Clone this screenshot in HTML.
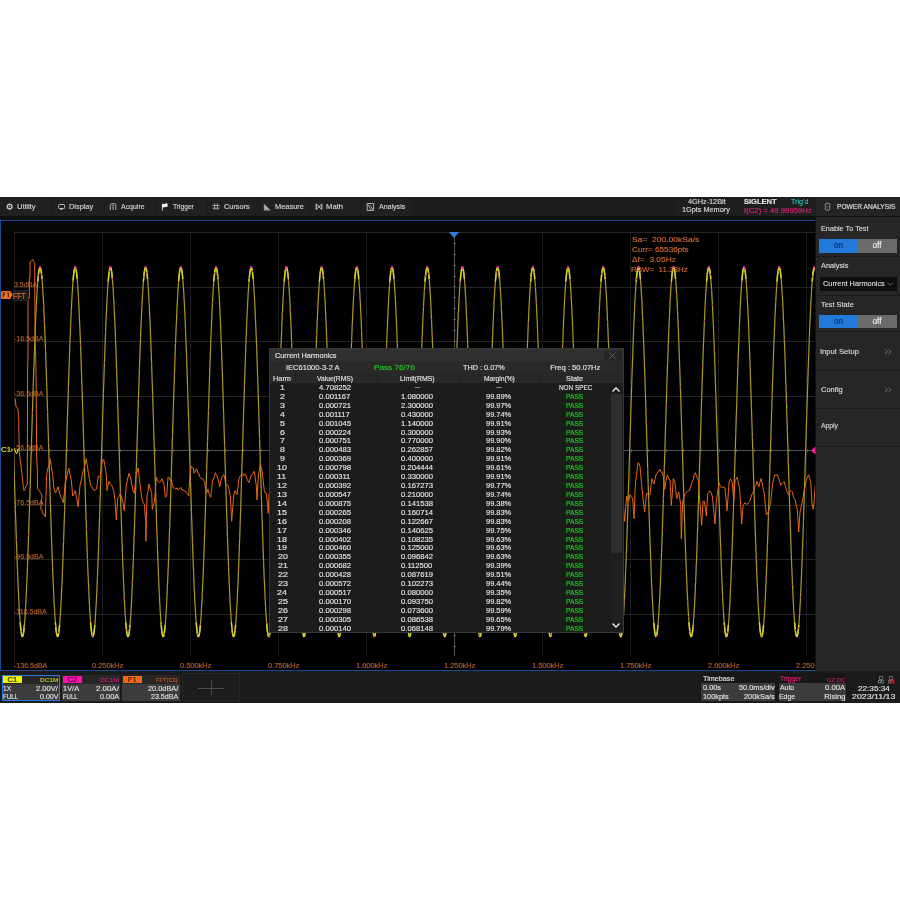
<!DOCTYPE html>
<html><head><meta charset="utf-8"><style>
*{margin:0;padding:0;box-sizing:border-box}
html,body{width:900px;height:900px;background:#fff;overflow:hidden}
body{position:relative;font-family:"Liberation Sans", sans-serif}
#w{position:absolute;left:0;top:0;width:900px;height:900px;will-change:transform}
.b{position:absolute}
.L{position:absolute;left:0;top:0}
.tx i{position:absolute;font-style:normal;line-height:10px;white-space:nowrap;transform-origin:0 0;-webkit-text-stroke:0.15px currentColor}
</style></head><body><div id="w">
<div class="b" style="left:0;top:197px;width:900px;height:506px;background:#000"></div>
<!-- top bar -->
<div class="b" style="left:0;top:197px;width:900px;height:19px;background:#1c1c1c"></div>
<div class="b" style="left:0;top:216px;width:900px;height:4px;background:#101010"></div>
<div class="b" style="left:0;top:197px;width:412px;height:19px;background:#202020"></div>
<div class="b" style="left:52px;top:197px;width:1px;height:19px;background:#1b1b1b"></div>
<div class="b" style="left:104px;top:197px;width:1px;height:19px;background:#1b1b1b"></div>
<div class="b" style="left:156px;top:197px;width:1px;height:19px;background:#1b1b1b"></div>
<div class="b" style="left:207px;top:197px;width:1px;height:19px;background:#1b1b1b"></div>
<div class="b" style="left:259px;top:197px;width:1px;height:19px;background:#1b1b1b"></div>
<div class="b" style="left:310px;top:197px;width:1px;height:19px;background:#1b1b1b"></div>
<div class="b" style="left:361px;top:197px;width:1px;height:19px;background:#1b1b1b"></div>
<div class="b" style="left:675px;top:197px;width:141px;height:19px;background:#1e1e1e"></div>
<div class="b" style="left:816px;top:197px;width:84px;height:19px;background:#242424"></div>
<div class="b" style="left:0;top:220px;width:816px;height:1px;background:#1b4a92"></div>
<div class="b" style="left:1px;top:221px;width:814px;height:11px;background:#070707"></div>
<svg class="L" width="900" height="900" viewBox="0 0 900 900">
 <polygon points="9.60,203.20 12.54,204.90 12.54,208.30 9.60,210.00 6.66,208.30 6.66,204.90" fill="#c8c8c8"/><circle cx="9.6" cy="206.6" r="1.7" fill="#202020"/><circle cx="9.6" cy="206.6" r="0.7" fill="#c8c8c8"/>
 <rect x="58.6" y="204.5" width="6" height="4" rx="0.8" fill="none" stroke="#b8b8b8" stroke-width="1"/><circle cx="61.4" cy="209.2" r="0.9" fill="#d0d0d0"/>
 <path d="M110.3 210V205.2Q110.5 204 112 203.8L114.5 203.6Q115.8 203.6 115.8 205V210M113.1 204.5V210" fill="none" stroke="#b4b4b4" stroke-width="1"/>
 <path d="M162.4 203.8V210.6" stroke="#d8d8d8" stroke-width="1"/>
 <path d="M162.4 203.6Q164 204.6 165.2 203.6Q166.4 203 167.6 203.8V207Q166.4 206.4 165.2 207Q164 207.8 162.4 207Z" fill="#f4f4f4"/>
 <path d="M214.6 203.3V210M217.4 203.3V210M212.4 205.5H219.6M212.4 208.2H219.6" stroke="#a8a8a8" stroke-width="0.9"/>
 <path d="M263.8 203.5V210.5H270.8Z" fill="#9c9c9c"/><path d="M265.2 207.2h1M266.5 208.3h1" stroke="#d8d8d8" stroke-width="0.8"/>
 <path d="M316.2 203.8V209.6M321.8 203.8V209.6M316.2 204L321.8 209.4M321.8 204L316.2 209.4" fill="none" stroke="#d0d0d0" stroke-width="1"/>
 <rect x="367.2" y="203.6" width="6.4" height="6.8" fill="none" stroke="#b0b0b0" stroke-width="1"/><path d="M367.5 204L371 209.8M370.2 205.5L373.2 210" stroke="#b0b0b0" stroke-width="0.9"/>
 <rect x="825.3" y="203.3" width="4.4" height="6.8" rx="0.8" fill="none" stroke="#8a8a8a" stroke-width="1"/><circle cx="827.5" cy="206.7" r="0.6" fill="#8a8a8a"/>
</svg>
<!-- right panel -->
<div class="b" style="left:816px;top:217px;width:84px;height:455px;background:#262626"></div>
<div class="b" style="left:815px;top:220px;width:1px;height:452px;background:#121212"></div>
<div class="b" style="left:818.5px;top:238.8px;width:39.5px;height:14px;background:#2378dc"></div>
<div class="b" style="left:858px;top:238.8px;width:39px;height:14px;background:#6a6a6a"></div>
<div class="b" style="left:816px;top:256px;width:84px;height:1px;background:#1a1a1a"></div>
<div class="b" style="left:819.5px;top:277px;width:77px;height:13.5px;background:#0e0e0e"></div>
<svg class="L" width="900" height="900" viewBox="0 0 900 900"><path d="M887.5 282.5L890.3 285.3L893 282.5" fill="none" stroke="#6a6a6a" stroke-width="0.9"/>
<path d="M885 349.5L887.5 351.8L885 354M888.5 349.5L891 351.8L888.5 354" fill="none" stroke="#6a6a6a" stroke-width="1"/>
<path d="M885 387.5L887.5 389.8L885 392M888.5 387.5L891 389.8L888.5 392" fill="none" stroke="#6a6a6a" stroke-width="1"/></svg>
<div class="b" style="left:816px;top:294.5px;width:84px;height:1px;background:#1a1a1a"></div>
<div class="b" style="left:818.5px;top:314.8px;width:39.5px;height:13.7px;background:#2378dc"></div>
<div class="b" style="left:858px;top:314.8px;width:39px;height:13.7px;background:#6a6a6a"></div>
<div class="b" style="left:816px;top:331px;width:84px;height:1px;background:#1a1a1a"></div>
<div class="b" style="left:816px;top:369.5px;width:84px;height:1px;background:#1a1a1a"></div>
<div class="b" style="left:816px;top:408px;width:84px;height:1px;background:#1a1a1a"></div>
<div class="b" style="left:816px;top:445.5px;width:84px;height:1px;background:#1a1a1a"></div>
<!-- plot -->
<svg class="L" width="900" height="900" viewBox="0 0 900 900">
<defs><clipPath id="pc"><rect x="14" y="221" width="801" height="449"/></clipPath><clipPath id="pc2"><rect x="1" y="221" width="814" height="449"/></clipPath></defs>
<path d="M14.5 232V669M102.5 232V669M190.5 232V669M278.5 232V669M366.5 232V669M454.5 232V669M542.5 232V669M630.5 232V669M718.5 232V669M806.5 232V669" stroke="#1a1a1a" stroke-width="1" fill="none"/>
<path d="M14 232.5H815M14 287.5H815M14 341.5H815M14 396.5H815M14 450.5H815M14 505.5H815M14 559.5H815M14 614.5H815" stroke="#242424" stroke-width="1" fill="none"/>
<path d="M454.5 232V669M14 450.5H815" stroke="#505050" stroke-width="1" fill="none"/>
<path d="M453 243.5h3M453 254.5h3M453 265.5h3M453 276.5h3M453 286.5h3M453 297.5h3M453 308.5h3M453 319.5h3M453 330.5h3M453 341.5h3M453 352.5h3M453 363.5h3M453 374.5h3M453 385.5h3M453 396.5h3M453 406.5h3M453 417.5h3M453 428.5h3M453 439.5h3M453 450.5h3M453 461.5h3M453 472.5h3M453 483.5h3M453 494.5h3M453 504.5h3M453 515.5h3M453 526.5h3M453 537.5h3M453 548.5h3M453 559.5h3M453 570.5h3M453 581.5h3M453 592.5h3M453 603.5h3M453 614.5h3M453 624.5h3M453 635.5h3M453 646.5h3M453 657.5h3M32.5 449v3M49.5 449v3M67.5 449v3M84.5 449v3M102.5 449v3M120.5 449v3M137.5 449v3M155.5 449v3M173.5 449v3M190.5 449v3M208.5 449v3M225.5 449v3M243.5 449v3M261.5 449v3M278.5 449v3M296.5 449v3M313.5 449v3M331.5 449v3M349.5 449v3M366.5 449v3M384.5 449v3M402.5 449v3M419.5 449v3M437.5 449v3M454.5 449v3M472.5 449v3M490.5 449v3M507.5 449v3M525.5 449v3M542.5 449v3M560.5 449v3M578.5 449v3M595.5 449v3M613.5 449v3M631.5 449v3M648.5 449v3M666.5 449v3M683.5 449v3M701.5 449v3M719.5 449v3M736.5 449v3M754.5 449v3M771.5 449v3M789.5 449v3M807.5 449v3" stroke="#505050" stroke-width="1" fill="none"/>
</svg>
<div class="b" style="left:88.9px;top:656px;width:37px;height:13.5px;background:#000"></div>
<div class="b" style="left:176.98px;top:656px;width:37px;height:13.5px;background:#000"></div>
<div class="b" style="left:265.06px;top:656px;width:37px;height:13.5px;background:#000"></div>
<div class="b" style="left:353.14px;top:656px;width:37px;height:13.5px;background:#000"></div>
<div class="b" style="left:441.22px;top:656px;width:37px;height:13.5px;background:#000"></div>
<div class="b" style="left:529.3px;top:656px;width:37px;height:13.5px;background:#000"></div>
<div class="b" style="left:617.38px;top:656px;width:37px;height:13.5px;background:#000"></div>
<div class="b" style="left:705.46px;top:656px;width:37px;height:13.5px;background:#000"></div>
<div class="b" style="left:793.54px;top:656px;width:21.46px;height:13.5px;background:#000"></div><div class="tx"><i style="left:14.43px;top:279.75px;font-size:8px;color:#b8642e;transform:scaleX(0.88);">3.5dBA</i>
<i style="left:14.39px;top:333.75px;font-size:8px;color:#b8642e;transform:scaleX(0.88);">-16.5dBA</i>
<i style="left:14.39px;top:388.75px;font-size:8px;color:#b8642e;transform:scaleX(0.88);">-36.5dBA</i>
<i style="left:14.39px;top:442.75px;font-size:8px;color:#b8642e;transform:scaleX(0.88);">-56.5dBA</i>
<i style="left:14.39px;top:497.75px;font-size:8px;color:#b8642e;transform:scaleX(0.88);">-76.5dBA</i>
<i style="left:14.39px;top:551.75px;font-size:8px;color:#b8642e;transform:scaleX(0.88);">-96.5dBA</i>
<i style="left:14.39px;top:606.75px;font-size:8px;color:#b8642e;transform:scaleX(0.88);">-116.5dBA</i>
<i style="left:14.39px;top:660.75px;font-size:8px;color:#b8642e;transform:scaleX(0.88);">-136.5dBA</i>
<i style="left:91.61px;top:660.75px;font-size:8px;color:#b8642e;transform:scaleX(0.93);">0.250kHz</i>
<i style="left:179.69px;top:660.75px;font-size:8px;color:#b8642e;transform:scaleX(0.93);">0.500kHz</i>
<i style="left:267.77px;top:660.75px;font-size:8px;color:#b8642e;transform:scaleX(0.93);">0.750kHz</i>
<i style="left:355.57px;top:660.75px;font-size:8px;color:#b8642e;transform:scaleX(0.93);">1.000kHz</i>
<i style="left:443.65px;top:660.75px;font-size:8px;color:#b8642e;transform:scaleX(0.93);">1.250kHz</i>
<i style="left:531.73px;top:660.75px;font-size:8px;color:#b8642e;transform:scaleX(0.93);">1.500kHz</i>
<i style="left:619.81px;top:660.75px;font-size:8px;color:#b8642e;transform:scaleX(0.93);">1.750kHz</i>
<i style="left:708.08px;top:660.75px;font-size:8px;color:#b8642e;transform:scaleX(0.93);">2.000kHz</i>
<i style="left:796.16px;top:660.75px;font-size:8px;color:#b8642e;transform:scaleX(0.93);">2.250</i>
<i style="left:631.52px;top:234.75px;font-size:7.8px;color:#d46c34;transform:scaleX(1.09);white-space:pre;">Sa=  200.00kSa/s</i>
<i style="left:631.58px;top:244.75px;font-size:7.8px;color:#d46c34;transform:scaleX(1.05);white-space:pre;">Curr= 65536pts</i>
<i style="left:631.75px;top:254.75px;font-size:7.8px;color:#d46c34;transform:scaleX(1.07);white-space:pre;">Δf=  3.05Hz</i>
<i style="left:631.35px;top:264.75px;font-size:7.8px;color:#d46c34;transform:scaleX(1.02);white-space:pre;">RBW=  11.38Hz</i></div>
<svg class="L" width="900" height="900" viewBox="0 0 900 900">
<defs><clipPath id="pc"><rect x="14" y="221" width="801" height="449"/></clipPath><clipPath id="pc2"><rect x="1" y="221" width="814" height="449"/></clipPath></defs>
<g clip-path="url(#pc)">
<path d="M13 432.27 L13.4 445.41 L13.8 458.59 L14.2 471.73 L14.6 484.78 L15 497.65 L15.4 510.3 L15.8 522.64 L16.2 534.63 L16.6 546.2 L17 557.28 L17.4 567.83 L17.8 577.79 L18.2 587.11 L18.6 595.74 L19 603.63 L19.4 610.76 L19.8 617.07 L20.2 622.55 L20.6 627.15 L21 630.87 L21.4 633.67 L21.8 635.54 L22.2 636.48 L22.6 636.48 L23 635.54 L23.4 633.67 L23.8 630.87 L24.2 627.15 L24.6 622.55 L25 617.07 L25.4 610.76 L25.8 603.63 L26.2 595.74 L26.6 587.11 L27 577.79 L27.4 567.83 L27.8 557.28 L28.2 546.2 L28.6 534.63 L29 522.64 L29.4 510.3 L29.8 497.65 L30.2 484.78 L30.6 471.73 L31 458.59 L31.4 445.41 L31.8 432.27 L32.2 419.22 L32.6 406.35 L33 393.7 L33.4 381.36 L33.8 369.37 L34.2 357.8 L34.6 346.72 L35 336.17 L35.4 326.21 L35.8 316.89 L36.2 308.26 L36.6 300.37 L37 293.24 L37.4 286.93 L37.8 281.45 L38.2 276.85 L38.6 273.13 L39 270.33 L39.4 268.46 L39.8 267.52 L40.2 267.52 L40.6 268.46 L41 270.33 L41.4 273.13 L41.8 276.85 L42.2 281.45 L42.6 286.93 L43 293.24 L43.4 300.37 L43.8 308.26 L44.2 316.89 L44.6 326.21 L45 336.17 L45.4 346.72 L45.8 357.8 L46.2 369.37 L46.6 381.36 L47 393.7 L47.4 406.35 L47.8 419.22 L48.2 432.27 L48.6 445.41 L49 458.59 L49.4 471.73 L49.8 484.78 L50.2 497.65 L50.6 510.3 L51 522.64 L51.4 534.63 L51.8 546.2 L52.2 557.28 L52.6 567.83 L53 577.79 L53.4 587.11 L53.8 595.74 L54.2 603.63 L54.6 610.76 L55 617.07 L55.4 622.55 L55.8 627.15 L56.2 630.87 L56.6 633.67 L57 635.54 L57.4 636.48 L57.8 636.48 L58.2 635.54 L58.6 633.67 L59 630.87 L59.4 627.15 L59.8 622.55 L60.2 617.07 L60.6 610.76 L61 603.63 L61.4 595.74 L61.8 587.11 L62.2 577.79 L62.6 567.83 L63 557.28 L63.4 546.2 L63.8 534.63 L64.2 522.64 L64.6 510.3 L65 497.65 L65.4 484.78 L65.8 471.73 L66.2 458.59 L66.6 445.41 L67 432.27 L67.4 419.22 L67.8 406.35 L68.2 393.7 L68.6 381.36 L69 369.37 L69.4 357.8 L69.8 346.72 L70.2 336.17 L70.6 326.21 L71 316.89 L71.4 308.26 L71.8 300.37 L72.2 293.24 L72.6 286.93 L73 281.45 L73.4 276.85 L73.8 273.13 L74.2 270.33 L74.6 268.46 L75 267.52 L75.4 267.52 L75.8 268.46 L76.2 270.33 L76.6 273.13 L77 276.85 L77.4 281.45 L77.8 286.93 L78.2 293.24 L78.6 300.37 L79 308.26 L79.4 316.89 L79.8 326.21 L80.2 336.17 L80.6 346.72 L81 357.8 L81.4 369.37 L81.8 381.36 L82.2 393.7 L82.6 406.35 L83 419.22 L83.4 432.27 L83.8 445.41 L84.2 458.59 L84.6 471.73 L85 484.78 L85.4 497.65 L85.8 510.3 L86.2 522.64 L86.6 534.63 L87 546.2 L87.4 557.28 L87.8 567.83 L88.2 577.79 L88.6 587.11 L89 595.74 L89.4 603.63 L89.8 610.76 L90.2 617.07 L90.6 622.55 L91 627.15 L91.4 630.87 L91.8 633.67 L92.2 635.54 L92.6 636.48 L93 636.48 L93.4 635.54 L93.8 633.67 L94.2 630.87 L94.6 627.15 L95 622.55 L95.4 617.07 L95.8 610.76 L96.2 603.63 L96.6 595.74 L97 587.11 L97.4 577.79 L97.8 567.83 L98.2 557.28 L98.6 546.2 L99 534.63 L99.4 522.64 L99.8 510.3 L100.2 497.65 L100.6 484.78 L101 471.73 L101.4 458.59 L101.8 445.41 L102.2 432.27 L102.6 419.22 L103 406.35 L103.4 393.7 L103.8 381.36 L104.2 369.37 L104.6 357.8 L105 346.72 L105.4 336.17 L105.8 326.21 L106.2 316.89 L106.6 308.26 L107 300.37 L107.4 293.24 L107.8 286.93 L108.2 281.45 L108.6 276.85 L109 273.13 L109.4 270.33 L109.8 268.46 L110.2 267.52 L110.6 267.52 L111 268.46 L111.4 270.33 L111.8 273.13 L112.2 276.85 L112.6 281.45 L113 286.93 L113.4 293.24 L113.8 300.37 L114.2 308.26 L114.6 316.89 L115 326.21 L115.4 336.17 L115.8 346.72 L116.2 357.8 L116.6 369.37 L117 381.36 L117.4 393.7 L117.8 406.35 L118.2 419.22 L118.6 432.27 L119 445.41 L119.4 458.59 L119.8 471.73 L120.2 484.78 L120.6 497.65 L121 510.3 L121.4 522.64 L121.8 534.63 L122.2 546.2 L122.6 557.28 L123 567.83 L123.4 577.79 L123.8 587.11 L124.2 595.74 L124.6 603.63 L125 610.76 L125.4 617.07 L125.8 622.55 L126.2 627.15 L126.6 630.87 L127 633.67 L127.4 635.54 L127.8 636.48 L128.2 636.48 L128.6 635.54 L129 633.67 L129.4 630.87 L129.8 627.15 L130.2 622.55 L130.6 617.07 L131 610.76 L131.4 603.63 L131.8 595.74 L132.2 587.11 L132.6 577.79 L133 567.83 L133.4 557.28 L133.8 546.2 L134.2 534.63 L134.6 522.64 L135 510.3 L135.4 497.65 L135.8 484.78 L136.2 471.73 L136.6 458.59 L137 445.41 L137.4 432.27 L137.8 419.22 L138.2 406.35 L138.6 393.7 L139 381.36 L139.4 369.37 L139.8 357.8 L140.2 346.72 L140.6 336.17 L141 326.21 L141.4 316.89 L141.8 308.26 L142.2 300.37 L142.6 293.24 L143 286.93 L143.4 281.45 L143.8 276.85 L144.2 273.13 L144.6 270.33 L145 268.46 L145.4 267.52 L145.8 267.52 L146.2 268.46 L146.6 270.33 L147 273.13 L147.4 276.85 L147.8 281.45 L148.2 286.93 L148.6 293.24 L149 300.37 L149.4 308.26 L149.8 316.89 L150.2 326.21 L150.6 336.17 L151 346.72 L151.4 357.8 L151.8 369.37 L152.2 381.36 L152.6 393.7 L153 406.35 L153.4 419.22 L153.8 432.27 L154.2 445.41 L154.6 458.59 L155 471.73 L155.4 484.78 L155.8 497.65 L156.2 510.3 L156.6 522.64 L157 534.63 L157.4 546.2 L157.8 557.28 L158.2 567.83 L158.6 577.79 L159 587.11 L159.4 595.74 L159.8 603.63 L160.2 610.76 L160.6 617.07 L161 622.55 L161.4 627.15 L161.8 630.87 L162.2 633.67 L162.6 635.54 L163 636.48 L163.4 636.48 L163.8 635.54 L164.2 633.67 L164.6 630.87 L165 627.15 L165.4 622.55 L165.8 617.07 L166.2 610.76 L166.6 603.63 L167 595.74 L167.4 587.11 L167.8 577.79 L168.2 567.83 L168.6 557.28 L169 546.2 L169.4 534.63 L169.8 522.64 L170.2 510.3 L170.6 497.65 L171 484.78 L171.4 471.73 L171.8 458.59 L172.2 445.41 L172.6 432.27 L173 419.22 L173.4 406.35 L173.8 393.7 L174.2 381.36 L174.6 369.37 L175 357.8 L175.4 346.72 L175.8 336.17 L176.2 326.21 L176.6 316.89 L177 308.26 L177.4 300.37 L177.8 293.24 L178.2 286.93 L178.6 281.45 L179 276.85 L179.4 273.13 L179.8 270.33 L180.2 268.46 L180.6 267.52 L181 267.52 L181.4 268.46 L181.8 270.33 L182.2 273.13 L182.6 276.85 L183 281.45 L183.4 286.93 L183.8 293.24 L184.2 300.37 L184.6 308.26 L185 316.89 L185.4 326.21 L185.8 336.17 L186.2 346.72 L186.6 357.8 L187 369.37 L187.4 381.36 L187.8 393.7 L188.2 406.35 L188.6 419.22 L189 432.27 L189.4 445.41 L189.8 458.59 L190.2 471.73 L190.6 484.78 L191 497.65 L191.4 510.3 L191.8 522.64 L192.2 534.63 L192.6 546.2 L193 557.28 L193.4 567.83 L193.8 577.79 L194.2 587.11 L194.6 595.74 L195 603.63 L195.4 610.76 L195.8 617.07 L196.2 622.55 L196.6 627.15 L197 630.87 L197.4 633.67 L197.8 635.54 L198.2 636.48 L198.6 636.48 L199 635.54 L199.4 633.67 L199.8 630.87 L200.2 627.15 L200.6 622.55 L201 617.07 L201.4 610.76 L201.8 603.63 L202.2 595.74 L202.6 587.11 L203 577.79 L203.4 567.83 L203.8 557.28 L204.2 546.2 L204.6 534.63 L205 522.64 L205.4 510.3 L205.8 497.65 L206.2 484.78 L206.6 471.73 L207 458.59 L207.4 445.41 L207.8 432.27 L208.2 419.22 L208.6 406.35 L209 393.7 L209.4 381.36 L209.8 369.37 L210.2 357.8 L210.6 346.72 L211 336.17 L211.4 326.21 L211.8 316.89 L212.2 308.26 L212.6 300.37 L213 293.24 L213.4 286.93 L213.8 281.45 L214.2 276.85 L214.6 273.13 L215 270.33 L215.4 268.46 L215.8 267.52 L216.2 267.52 L216.6 268.46 L217 270.33 L217.4 273.13 L217.8 276.85 L218.2 281.45 L218.6 286.93 L219 293.24 L219.4 300.37 L219.8 308.26 L220.2 316.89 L220.6 326.21 L221 336.17 L221.4 346.72 L221.8 357.8 L222.2 369.37 L222.6 381.36 L223 393.7 L223.4 406.35 L223.8 419.22 L224.2 432.27 L224.6 445.41 L225 458.59 L225.4 471.73 L225.8 484.78 L226.2 497.65 L226.6 510.3 L227 522.64 L227.4 534.63 L227.8 546.2 L228.2 557.28 L228.6 567.83 L229 577.79 L229.4 587.11 L229.8 595.74 L230.2 603.63 L230.6 610.76 L231 617.07 L231.4 622.55 L231.8 627.15 L232.2 630.87 L232.6 633.67 L233 635.54 L233.4 636.48 L233.8 636.48 L234.2 635.54 L234.6 633.67 L235 630.87 L235.4 627.15 L235.8 622.55 L236.2 617.07 L236.6 610.76 L237 603.63 L237.4 595.74 L237.8 587.11 L238.2 577.79 L238.6 567.83 L239 557.28 L239.4 546.2 L239.8 534.63 L240.2 522.64 L240.6 510.3 L241 497.65 L241.4 484.78 L241.8 471.73 L242.2 458.59 L242.6 445.41 L243 432.27 L243.4 419.22 L243.8 406.35 L244.2 393.7 L244.6 381.36 L245 369.37 L245.4 357.8 L245.8 346.72 L246.2 336.17 L246.6 326.21 L247 316.89 L247.4 308.26 L247.8 300.37 L248.2 293.24 L248.6 286.93 L249 281.45 L249.4 276.85 L249.8 273.13 L250.2 270.33 L250.6 268.46 L251 267.52 L251.4 267.52 L251.8 268.46 L252.2 270.33 L252.6 273.13 L253 276.85 L253.4 281.45 L253.8 286.93 L254.2 293.24 L254.6 300.37 L255 308.26 L255.4 316.89 L255.8 326.21 L256.2 336.17 L256.6 346.72 L257 357.8 L257.4 369.37 L257.8 381.36 L258.2 393.7 L258.6 406.35 L259 419.22 L259.4 432.27 L259.8 445.41 L260.2 458.59 L260.6 471.73 L261 484.78 L261.4 497.65 L261.8 510.3 L262.2 522.64 L262.6 534.63 L263 546.2 L263.4 557.28 L263.8 567.83 L264.2 577.79 L264.6 587.11 L265 595.74 L265.4 603.63 L265.8 610.76 L266.2 617.07 L266.6 622.55 L267 627.15 L267.4 630.87 L267.8 633.67 L268.2 635.54 L268.6 636.48 L269 636.48 L269.4 635.54 L269.8 633.67 L270.2 630.87 L270.6 627.15 L271 622.55 L271.4 617.07 L271.8 610.76 L272.2 603.63 L272.6 595.74 L273 587.11 L273.4 577.79 L273.8 567.83 L274.2 557.28 L274.6 546.2 L275 534.63 L275.4 522.64 L275.8 510.3 L276.2 497.65 L276.6 484.78 L277 471.73 L277.4 458.59 L277.8 445.41 L278.2 432.27 L278.6 419.22 L279 406.35 L279.4 393.7 L279.8 381.36 L280.2 369.37 L280.6 357.8 L281 346.72 L281.4 336.17 L281.8 326.21 L282.2 316.89 L282.6 308.26 L283 300.37 L283.4 293.24 L283.8 286.93 L284.2 281.45 L284.6 276.85 L285 273.13 L285.4 270.33 L285.8 268.46 L286.2 267.52 L286.6 267.52 L287 268.46 L287.4 270.33 L287.8 273.13 L288.2 276.85 L288.6 281.45 L289 286.93 L289.4 293.24 L289.8 300.37 L290.2 308.26 L290.6 316.89 L291 326.21 L291.4 336.17 L291.8 346.72 L292.2 357.8 L292.6 369.37 L293 381.36 L293.4 393.7 L293.8 406.35 L294.2 419.22 L294.6 432.27 L295 445.41 L295.4 458.59 L295.8 471.73 L296.2 484.78 L296.6 497.65 L297 510.3 L297.4 522.64 L297.8 534.63 L298.2 546.2 L298.6 557.28 L299 567.83 L299.4 577.79 L299.8 587.11 L300.2 595.74 L300.6 603.63 L301 610.76 L301.4 617.07 L301.8 622.55 L302.2 627.15 L302.6 630.87 L303 633.67 L303.4 635.54 L303.8 636.48 L304.2 636.48 L304.6 635.54 L305 633.67 L305.4 630.87 L305.8 627.15 L306.2 622.55 L306.6 617.07 L307 610.76 L307.4 603.63 L307.8 595.74 L308.2 587.11 L308.6 577.79 L309 567.83 L309.4 557.28 L309.8 546.2 L310.2 534.63 L310.6 522.64 L311 510.3 L311.4 497.65 L311.8 484.78 L312.2 471.73 L312.6 458.59 L313 445.41 L313.4 432.27 L313.8 419.22 L314.2 406.35 L314.6 393.7 L315 381.36 L315.4 369.37 L315.8 357.8 L316.2 346.72 L316.6 336.17 L317 326.21 L317.4 316.89 L317.8 308.26 L318.2 300.37 L318.6 293.24 L319 286.93 L319.4 281.45 L319.8 276.85 L320.2 273.13 L320.6 270.33 L321 268.46 L321.4 267.52 L321.8 267.52 L322.2 268.46 L322.6 270.33 L323 273.13 L323.4 276.85 L323.8 281.45 L324.2 286.93 L324.6 293.24 L325 300.37 L325.4 308.26 L325.8 316.89 L326.2 326.21 L326.6 336.17 L327 346.72 L327.4 357.8 L327.8 369.37 L328.2 381.36 L328.6 393.7 L329 406.35 L329.4 419.22 L329.8 432.27 L330.2 445.41 L330.6 458.59 L331 471.73 L331.4 484.78 L331.8 497.65 L332.2 510.3 L332.6 522.64 L333 534.63 L333.4 546.2 L333.8 557.28 L334.2 567.83 L334.6 577.79 L335 587.11 L335.4 595.74 L335.8 603.63 L336.2 610.76 L336.6 617.07 L337 622.55 L337.4 627.15 L337.8 630.87 L338.2 633.67 L338.6 635.54 L339 636.48 L339.4 636.48 L339.8 635.54 L340.2 633.67 L340.6 630.87 L341 627.15 L341.4 622.55 L341.8 617.07 L342.2 610.76 L342.6 603.63 L343 595.74 L343.4 587.11 L343.8 577.79 L344.2 567.83 L344.6 557.28 L345 546.2 L345.4 534.63 L345.8 522.64 L346.2 510.3 L346.6 497.65 L347 484.78 L347.4 471.73 L347.8 458.59 L348.2 445.41 L348.6 432.27 L349 419.22 L349.4 406.35 L349.8 393.7 L350.2 381.36 L350.6 369.37 L351 357.8 L351.4 346.72 L351.8 336.17 L352.2 326.21 L352.6 316.89 L353 308.26 L353.4 300.37 L353.8 293.24 L354.2 286.93 L354.6 281.45 L355 276.85 L355.4 273.13 L355.8 270.33 L356.2 268.46 L356.6 267.52 L357 267.52 L357.4 268.46 L357.8 270.33 L358.2 273.13 L358.6 276.85 L359 281.45 L359.4 286.93 L359.8 293.24 L360.2 300.37 L360.6 308.26 L361 316.89 L361.4 326.21 L361.8 336.17 L362.2 346.72 L362.6 357.8 L363 369.37 L363.4 381.36 L363.8 393.7 L364.2 406.35 L364.6 419.22 L365 432.27 L365.4 445.41 L365.8 458.59 L366.2 471.73 L366.6 484.78 L367 497.65 L367.4 510.3 L367.8 522.64 L368.2 534.63 L368.6 546.2 L369 557.28 L369.4 567.83 L369.8 577.79 L370.2 587.11 L370.6 595.74 L371 603.63 L371.4 610.76 L371.8 617.07 L372.2 622.55 L372.6 627.15 L373 630.87 L373.4 633.67 L373.8 635.54 L374.2 636.48 L374.6 636.48 L375 635.54 L375.4 633.67 L375.8 630.87 L376.2 627.15 L376.6 622.55 L377 617.07 L377.4 610.76 L377.8 603.63 L378.2 595.74 L378.6 587.11 L379 577.79 L379.4 567.83 L379.8 557.28 L380.2 546.2 L380.6 534.63 L381 522.64 L381.4 510.3 L381.8 497.65 L382.2 484.78 L382.6 471.73 L383 458.59 L383.4 445.41 L383.8 432.27 L384.2 419.22 L384.6 406.35 L385 393.7 L385.4 381.36 L385.8 369.37 L386.2 357.8 L386.6 346.72 L387 336.17 L387.4 326.21 L387.8 316.89 L388.2 308.26 L388.6 300.37 L389 293.24 L389.4 286.93 L389.8 281.45 L390.2 276.85 L390.6 273.13 L391 270.33 L391.4 268.46 L391.8 267.52 L392.2 267.52 L392.6 268.46 L393 270.33 L393.4 273.13 L393.8 276.85 L394.2 281.45 L394.6 286.93 L395 293.24 L395.4 300.37 L395.8 308.26 L396.2 316.89 L396.6 326.21 L397 336.17 L397.4 346.72 L397.8 357.8 L398.2 369.37 L398.6 381.36 L399 393.7 L399.4 406.35 L399.8 419.22 L400.2 432.27 L400.6 445.41 L401 458.59 L401.4 471.73 L401.8 484.78 L402.2 497.65 L402.6 510.3 L403 522.64 L403.4 534.63 L403.8 546.2 L404.2 557.28 L404.6 567.83 L405 577.79 L405.4 587.11 L405.8 595.74 L406.2 603.63 L406.6 610.76 L407 617.07 L407.4 622.55 L407.8 627.15 L408.2 630.87 L408.6 633.67 L409 635.54 L409.4 636.48 L409.8 636.48 L410.2 635.54 L410.6 633.67 L411 630.87 L411.4 627.15 L411.8 622.55 L412.2 617.07 L412.6 610.76 L413 603.63 L413.4 595.74 L413.8 587.11 L414.2 577.79 L414.6 567.83 L415 557.28 L415.4 546.2 L415.8 534.63 L416.2 522.64 L416.6 510.3 L417 497.65 L417.4 484.78 L417.8 471.73 L418.2 458.59 L418.6 445.41 L419 432.27 L419.4 419.22 L419.8 406.35 L420.2 393.7 L420.6 381.36 L421 369.37 L421.4 357.8 L421.8 346.72 L422.2 336.17 L422.6 326.21 L423 316.89 L423.4 308.26 L423.8 300.37 L424.2 293.24 L424.6 286.93 L425 281.45 L425.4 276.85 L425.8 273.13 L426.2 270.33 L426.6 268.46 L427 267.52 L427.4 267.52 L427.8 268.46 L428.2 270.33 L428.6 273.13 L429 276.85 L429.4 281.45 L429.8 286.93 L430.2 293.24 L430.6 300.37 L431 308.26 L431.4 316.89 L431.8 326.21 L432.2 336.17 L432.6 346.72 L433 357.8 L433.4 369.37 L433.8 381.36 L434.2 393.7 L434.6 406.35 L435 419.22 L435.4 432.27 L435.8 445.41 L436.2 458.59 L436.6 471.73 L437 484.78 L437.4 497.65 L437.8 510.3 L438.2 522.64 L438.6 534.63 L439 546.2 L439.4 557.28 L439.8 567.83 L440.2 577.79 L440.6 587.11 L441 595.74 L441.4 603.63 L441.8 610.76 L442.2 617.07 L442.6 622.55 L443 627.15 L443.4 630.87 L443.8 633.67 L444.2 635.54 L444.6 636.48 L445 636.48 L445.4 635.54 L445.8 633.67 L446.2 630.87 L446.6 627.15 L447 622.55 L447.4 617.07 L447.8 610.76 L448.2 603.63 L448.6 595.74 L449 587.11 L449.4 577.79 L449.8 567.83 L450.2 557.28 L450.6 546.2 L451 534.63 L451.4 522.64 L451.8 510.3 L452.2 497.65 L452.6 484.78 L453 471.73 L453.4 458.59 L453.8 445.41 L454.2 432.27 L454.6 419.22 L455 406.35 L455.4 393.7 L455.8 381.36 L456.2 369.37 L456.6 357.8 L457 346.72 L457.4 336.17 L457.8 326.21 L458.2 316.89 L458.6 308.26 L459 300.37 L459.4 293.24 L459.8 286.93 L460.2 281.45 L460.6 276.85 L461 273.13 L461.4 270.33 L461.8 268.46 L462.2 267.52 L462.6 267.52 L463 268.46 L463.4 270.33 L463.8 273.13 L464.2 276.85 L464.6 281.45 L465 286.93 L465.4 293.24 L465.8 300.37 L466.2 308.26 L466.6 316.89 L467 326.21 L467.4 336.17 L467.8 346.72 L468.2 357.8 L468.6 369.37 L469 381.36 L469.4 393.7 L469.8 406.35 L470.2 419.22 L470.6 432.27 L471 445.41 L471.4 458.59 L471.8 471.73 L472.2 484.78 L472.6 497.65 L473 510.3 L473.4 522.64 L473.8 534.63 L474.2 546.2 L474.6 557.28 L475 567.83 L475.4 577.79 L475.8 587.11 L476.2 595.74 L476.6 603.63 L477 610.76 L477.4 617.07 L477.8 622.55 L478.2 627.15 L478.6 630.87 L479 633.67 L479.4 635.54 L479.8 636.48 L480.2 636.48 L480.6 635.54 L481 633.67 L481.4 630.87 L481.8 627.15 L482.2 622.55 L482.6 617.07 L483 610.76 L483.4 603.63 L483.8 595.74 L484.2 587.11 L484.6 577.79 L485 567.83 L485.4 557.28 L485.8 546.2 L486.2 534.63 L486.6 522.64 L487 510.3 L487.4 497.65 L487.8 484.78 L488.2 471.73 L488.6 458.59 L489 445.41 L489.4 432.27 L489.8 419.22 L490.2 406.35 L490.6 393.7 L491 381.36 L491.4 369.37 L491.8 357.8 L492.2 346.72 L492.6 336.17 L493 326.21 L493.4 316.89 L493.8 308.26 L494.2 300.37 L494.6 293.24 L495 286.93 L495.4 281.45 L495.8 276.85 L496.2 273.13 L496.6 270.33 L497 268.46 L497.4 267.52 L497.8 267.52 L498.2 268.46 L498.6 270.33 L499 273.13 L499.4 276.85 L499.8 281.45 L500.2 286.93 L500.6 293.24 L501 300.37 L501.4 308.26 L501.8 316.89 L502.2 326.21 L502.6 336.17 L503 346.72 L503.4 357.8 L503.8 369.37 L504.2 381.36 L504.6 393.7 L505 406.35 L505.4 419.22 L505.8 432.27 L506.2 445.41 L506.6 458.59 L507 471.73 L507.4 484.78 L507.8 497.65 L508.2 510.3 L508.6 522.64 L509 534.63 L509.4 546.2 L509.8 557.28 L510.2 567.83 L510.6 577.79 L511 587.11 L511.4 595.74 L511.8 603.63 L512.2 610.76 L512.6 617.07 L513 622.55 L513.4 627.15 L513.8 630.87 L514.2 633.67 L514.6 635.54 L515 636.48 L515.4 636.48 L515.8 635.54 L516.2 633.67 L516.6 630.87 L517 627.15 L517.4 622.55 L517.8 617.07 L518.2 610.76 L518.6 603.63 L519 595.74 L519.4 587.11 L519.8 577.79 L520.2 567.83 L520.6 557.28 L521 546.2 L521.4 534.63 L521.8 522.64 L522.2 510.3 L522.6 497.65 L523 484.78 L523.4 471.73 L523.8 458.59 L524.2 445.41 L524.6 432.27 L525 419.22 L525.4 406.35 L525.8 393.7 L526.2 381.36 L526.6 369.37 L527 357.8 L527.4 346.72 L527.8 336.17 L528.2 326.21 L528.6 316.89 L529 308.26 L529.4 300.37 L529.8 293.24 L530.2 286.93 L530.6 281.45 L531 276.85 L531.4 273.13 L531.8 270.33 L532.2 268.46 L532.6 267.52 L533 267.52 L533.4 268.46 L533.8 270.33 L534.2 273.13 L534.6 276.85 L535 281.45 L535.4 286.93 L535.8 293.24 L536.2 300.37 L536.6 308.26 L537 316.89 L537.4 326.21 L537.8 336.17 L538.2 346.72 L538.6 357.8 L539 369.37 L539.4 381.36 L539.8 393.7 L540.2 406.35 L540.6 419.22 L541 432.27 L541.4 445.41 L541.8 458.59 L542.2 471.73 L542.6 484.78 L543 497.65 L543.4 510.3 L543.8 522.64 L544.2 534.63 L544.6 546.2 L545 557.28 L545.4 567.83 L545.8 577.79 L546.2 587.11 L546.6 595.74 L547 603.63 L547.4 610.76 L547.8 617.07 L548.2 622.55 L548.6 627.15 L549 630.87 L549.4 633.67 L549.8 635.54 L550.2 636.48 L550.6 636.48 L551 635.54 L551.4 633.67 L551.8 630.87 L552.2 627.15 L552.6 622.55 L553 617.07 L553.4 610.76 L553.8 603.63 L554.2 595.74 L554.6 587.11 L555 577.79 L555.4 567.83 L555.8 557.28 L556.2 546.2 L556.6 534.63 L557 522.64 L557.4 510.3 L557.8 497.65 L558.2 484.78 L558.6 471.73 L559 458.59 L559.4 445.41 L559.8 432.27 L560.2 419.22 L560.6 406.35 L561 393.7 L561.4 381.36 L561.8 369.37 L562.2 357.8 L562.6 346.72 L563 336.17 L563.4 326.21 L563.8 316.89 L564.2 308.26 L564.6 300.37 L565 293.24 L565.4 286.93 L565.8 281.45 L566.2 276.85 L566.6 273.13 L567 270.33 L567.4 268.46 L567.8 267.52 L568.2 267.52 L568.6 268.46 L569 270.33 L569.4 273.13 L569.8 276.85 L570.2 281.45 L570.6 286.93 L571 293.24 L571.4 300.37 L571.8 308.26 L572.2 316.89 L572.6 326.21 L573 336.17 L573.4 346.72 L573.8 357.8 L574.2 369.37 L574.6 381.36 L575 393.7 L575.4 406.35 L575.8 419.22 L576.2 432.27 L576.6 445.41 L577 458.59 L577.4 471.73 L577.8 484.78 L578.2 497.65 L578.6 510.3 L579 522.64 L579.4 534.63 L579.8 546.2 L580.2 557.28 L580.6 567.83 L581 577.79 L581.4 587.11 L581.8 595.74 L582.2 603.63 L582.6 610.76 L583 617.07 L583.4 622.55 L583.8 627.15 L584.2 630.87 L584.6 633.67 L585 635.54 L585.4 636.48 L585.8 636.48 L586.2 635.54 L586.6 633.67 L587 630.87 L587.4 627.15 L587.8 622.55 L588.2 617.07 L588.6 610.76 L589 603.63 L589.4 595.74 L589.8 587.11 L590.2 577.79 L590.6 567.83 L591 557.28 L591.4 546.2 L591.8 534.63 L592.2 522.64 L592.6 510.3 L593 497.65 L593.4 484.78 L593.8 471.73 L594.2 458.59 L594.6 445.41 L595 432.27 L595.4 419.22 L595.8 406.35 L596.2 393.7 L596.6 381.36 L597 369.37 L597.4 357.8 L597.8 346.72 L598.2 336.17 L598.6 326.21 L599 316.89 L599.4 308.26 L599.8 300.37 L600.2 293.24 L600.6 286.93 L601 281.45 L601.4 276.85 L601.8 273.13 L602.2 270.33 L602.6 268.46 L603 267.52 L603.4 267.52 L603.8 268.46 L604.2 270.33 L604.6 273.13 L605 276.85 L605.4 281.45 L605.8 286.93 L606.2 293.24 L606.6 300.37 L607 308.26 L607.4 316.89 L607.8 326.21 L608.2 336.17 L608.6 346.72 L609 357.8 L609.4 369.37 L609.8 381.36 L610.2 393.7 L610.6 406.35 L611 419.22 L611.4 432.27 L611.8 445.41 L612.2 458.59 L612.6 471.73 L613 484.78 L613.4 497.65 L613.8 510.3 L614.2 522.64 L614.6 534.63 L615 546.2 L615.4 557.28 L615.8 567.83 L616.2 577.79 L616.6 587.11 L617 595.74 L617.4 603.63 L617.8 610.76 L618.2 617.07 L618.6 622.55 L619 627.15 L619.4 630.87 L619.8 633.67 L620.2 635.54 L620.6 636.48 L621 636.48 L621.4 635.54 L621.8 633.67 L622.2 630.87 L622.6 627.15 L623 622.55 L623.4 617.07 L623.8 610.76 L624.2 603.63 L624.6 595.74 L625 587.11 L625.4 577.79 L625.8 567.83 L626.2 557.28 L626.6 546.2 L627 534.63 L627.4 522.64 L627.8 510.3 L628.2 497.65 L628.6 484.78 L629 471.73 L629.4 458.59 L629.8 445.41 L630.2 432.27 L630.6 419.22 L631 406.35 L631.4 393.7 L631.8 381.36 L632.2 369.37 L632.6 357.8 L633 346.72 L633.4 336.17 L633.8 326.21 L634.2 316.89 L634.6 308.26 L635 300.37 L635.4 293.24 L635.8 286.93 L636.2 281.45 L636.6 276.85 L637 273.13 L637.4 270.33 L637.8 268.46 L638.2 267.52 L638.6 267.52 L639 268.46 L639.4 270.33 L639.8 273.13 L640.2 276.85 L640.6 281.45 L641 286.93 L641.4 293.24 L641.8 300.37 L642.2 308.26 L642.6 316.89 L643 326.21 L643.4 336.17 L643.8 346.72 L644.2 357.8 L644.6 369.37 L645 381.36 L645.4 393.7 L645.8 406.35 L646.2 419.22 L646.6 432.27 L647 445.41 L647.4 458.59 L647.8 471.73 L648.2 484.78 L648.6 497.65 L649 510.3 L649.4 522.64 L649.8 534.63 L650.2 546.2 L650.6 557.28 L651 567.83 L651.4 577.79 L651.8 587.11 L652.2 595.74 L652.6 603.63 L653 610.76 L653.4 617.07 L653.8 622.55 L654.2 627.15 L654.6 630.87 L655 633.67 L655.4 635.54 L655.8 636.48 L656.2 636.48 L656.6 635.54 L657 633.67 L657.4 630.87 L657.8 627.15 L658.2 622.55 L658.6 617.07 L659 610.76 L659.4 603.63 L659.8 595.74 L660.2 587.11 L660.6 577.79 L661 567.83 L661.4 557.28 L661.8 546.2 L662.2 534.63 L662.6 522.64 L663 510.3 L663.4 497.65 L663.8 484.78 L664.2 471.73 L664.6 458.59 L665 445.41 L665.4 432.27 L665.8 419.22 L666.2 406.35 L666.6 393.7 L667 381.36 L667.4 369.37 L667.8 357.8 L668.2 346.72 L668.6 336.17 L669 326.21 L669.4 316.89 L669.8 308.26 L670.2 300.37 L670.6 293.24 L671 286.93 L671.4 281.45 L671.8 276.85 L672.2 273.13 L672.6 270.33 L673 268.46 L673.4 267.52 L673.8 267.52 L674.2 268.46 L674.6 270.33 L675 273.13 L675.4 276.85 L675.8 281.45 L676.2 286.93 L676.6 293.24 L677 300.37 L677.4 308.26 L677.8 316.89 L678.2 326.21 L678.6 336.17 L679 346.72 L679.4 357.8 L679.8 369.37 L680.2 381.36 L680.6 393.7 L681 406.35 L681.4 419.22 L681.8 432.27 L682.2 445.41 L682.6 458.59 L683 471.73 L683.4 484.78 L683.8 497.65 L684.2 510.3 L684.6 522.64 L685 534.63 L685.4 546.2 L685.8 557.28 L686.2 567.83 L686.6 577.79 L687 587.11 L687.4 595.74 L687.8 603.63 L688.2 610.76 L688.6 617.07 L689 622.55 L689.4 627.15 L689.8 630.87 L690.2 633.67 L690.6 635.54 L691 636.48 L691.4 636.48 L691.8 635.54 L692.2 633.67 L692.6 630.87 L693 627.15 L693.4 622.55 L693.8 617.07 L694.2 610.76 L694.6 603.63 L695 595.74 L695.4 587.11 L695.8 577.79 L696.2 567.83 L696.6 557.28 L697 546.2 L697.4 534.63 L697.8 522.64 L698.2 510.3 L698.6 497.65 L699 484.78 L699.4 471.73 L699.8 458.59 L700.2 445.41 L700.6 432.27 L701 419.22 L701.4 406.35 L701.8 393.7 L702.2 381.36 L702.6 369.37 L703 357.8 L703.4 346.72 L703.8 336.17 L704.2 326.21 L704.6 316.89 L705 308.26 L705.4 300.37 L705.8 293.24 L706.2 286.93 L706.6 281.45 L707 276.85 L707.4 273.13 L707.8 270.33 L708.2 268.46 L708.6 267.52 L709 267.52 L709.4 268.46 L709.8 270.33 L710.2 273.13 L710.6 276.85 L711 281.45 L711.4 286.93 L711.8 293.24 L712.2 300.37 L712.6 308.26 L713 316.89 L713.4 326.21 L713.8 336.17 L714.2 346.72 L714.6 357.8 L715 369.37 L715.4 381.36 L715.8 393.7 L716.2 406.35 L716.6 419.22 L717 432.27 L717.4 445.41 L717.8 458.59 L718.2 471.73 L718.6 484.78 L719 497.65 L719.4 510.3 L719.8 522.64 L720.2 534.63 L720.6 546.2 L721 557.28 L721.4 567.83 L721.8 577.79 L722.2 587.11 L722.6 595.74 L723 603.63 L723.4 610.76 L723.8 617.07 L724.2 622.55 L724.6 627.15 L725 630.87 L725.4 633.67 L725.8 635.54 L726.2 636.48 L726.6 636.48 L727 635.54 L727.4 633.67 L727.8 630.87 L728.2 627.15 L728.6 622.55 L729 617.07 L729.4 610.76 L729.8 603.63 L730.2 595.74 L730.6 587.11 L731 577.79 L731.4 567.83 L731.8 557.28 L732.2 546.2 L732.6 534.63 L733 522.64 L733.4 510.3 L733.8 497.65 L734.2 484.78 L734.6 471.73 L735 458.59 L735.4 445.41 L735.8 432.27 L736.2 419.22 L736.6 406.35 L737 393.7 L737.4 381.36 L737.8 369.37 L738.2 357.8 L738.6 346.72 L739 336.17 L739.4 326.21 L739.8 316.89 L740.2 308.26 L740.6 300.37 L741 293.24 L741.4 286.93 L741.8 281.45 L742.2 276.85 L742.6 273.13 L743 270.33 L743.4 268.46 L743.8 267.52 L744.2 267.52 L744.6 268.46 L745 270.33 L745.4 273.13 L745.8 276.85 L746.2 281.45 L746.6 286.93 L747 293.24 L747.4 300.37 L747.8 308.26 L748.2 316.89 L748.6 326.21 L749 336.17 L749.4 346.72 L749.8 357.8 L750.2 369.37 L750.6 381.36 L751 393.7 L751.4 406.35 L751.8 419.22 L752.2 432.27 L752.6 445.41 L753 458.59 L753.4 471.73 L753.8 484.78 L754.2 497.65 L754.6 510.3 L755 522.64 L755.4 534.63 L755.8 546.2 L756.2 557.28 L756.6 567.83 L757 577.79 L757.4 587.11 L757.8 595.74 L758.2 603.63 L758.6 610.76 L759 617.07 L759.4 622.55 L759.8 627.15 L760.2 630.87 L760.6 633.67 L761 635.54 L761.4 636.48 L761.8 636.48 L762.2 635.54 L762.6 633.67 L763 630.87 L763.4 627.15 L763.8 622.55 L764.2 617.07 L764.6 610.76 L765 603.63 L765.4 595.74 L765.8 587.11 L766.2 577.79 L766.6 567.83 L767 557.28 L767.4 546.2 L767.8 534.63 L768.2 522.64 L768.6 510.3 L769 497.65 L769.4 484.78 L769.8 471.73 L770.2 458.59 L770.6 445.41 L771 432.27 L771.4 419.22 L771.8 406.35 L772.2 393.7 L772.6 381.36 L773 369.37 L773.4 357.8 L773.8 346.72 L774.2 336.17 L774.6 326.21 L775 316.89 L775.4 308.26 L775.8 300.37 L776.2 293.24 L776.6 286.93 L777 281.45 L777.4 276.85 L777.8 273.13 L778.2 270.33 L778.6 268.46 L779 267.52 L779.4 267.52 L779.8 268.46 L780.2 270.33 L780.6 273.13 L781 276.85 L781.4 281.45 L781.8 286.93 L782.2 293.24 L782.6 300.37 L783 308.26 L783.4 316.89 L783.8 326.21 L784.2 336.17 L784.6 346.72 L785 357.8 L785.4 369.37 L785.8 381.36 L786.2 393.7 L786.6 406.35 L787 419.22 L787.4 432.27 L787.8 445.41 L788.2 458.59 L788.6 471.73 L789 484.78 L789.4 497.65 L789.8 510.3 L790.2 522.64 L790.6 534.63 L791 546.2 L791.4 557.28 L791.8 567.83 L792.2 577.79 L792.6 587.11 L793 595.74 L793.4 603.63 L793.8 610.76 L794.2 617.07 L794.6 622.55 L795 627.15 L795.4 630.87 L795.8 633.67 L796.2 635.54 L796.6 636.48 L797 636.48 L797.4 635.54 L797.8 633.67 L798.2 630.87 L798.6 627.15 L799 622.55 L799.4 617.07 L799.8 610.76 L800.2 603.63 L800.6 595.74 L801 587.11 L801.4 577.79 L801.8 567.83 L802.2 557.28 L802.6 546.2 L803 534.63 L803.4 522.64 L803.8 510.3 L804.2 497.65 L804.6 484.78 L805 471.73 L805.4 458.59 L805.8 445.41 L806.2 432.27 L806.6 419.22 L807 406.35 L807.4 393.7 L807.8 381.36 L808.2 369.37 L808.6 357.8 L809 346.72 L809.4 336.17 L809.8 326.21 L810.2 316.89 L810.6 308.26 L811 300.37 L811.4 293.24 L811.8 286.93 L812.2 281.45 L812.6 276.85 L813 273.13 L813.4 270.33 L813.8 268.46 L814.2 267.52 L814.6 267.52 L815 268.46 L815.4 270.33 L815.8 273.13 L816.2 276.85 L816.6 281.45 L817 286.93" stroke="#a4a01e" stroke-width="1.2" fill="none"/>
<path d="M20.2 622.55 L20.5 626.08 L20.8 629.12 L21.1 631.65 L21.4 633.67 L21.7 635.16 L22 636.13 L22.3 636.57 L22.6 636.48 L22.9 635.87 L23.2 634.72 L23.5 633.05 L23.8 630.87 L24.1 628.17 L24.4 624.96M37.8 281.45 L38.1 277.92 L38.4 274.88 L38.7 272.35 L39 270.33 L39.3 268.84 L39.6 267.87 L39.9 267.43 L40.2 267.52 L40.5 268.13 L40.8 269.28 L41.1 270.95 L41.4 273.13 L41.7 275.83 L42 279.04M55.4 622.55 L55.7 626.08 L56 629.12 L56.3 631.65 L56.6 633.67 L56.9 635.16 L57.2 636.13 L57.5 636.57 L57.8 636.48 L58.1 635.87 L58.4 634.72 L58.7 633.05 L59 630.87 L59.3 628.17 L59.6 624.96M73 281.45 L73.3 277.92 L73.6 274.88 L73.9 272.35 L74.2 270.33 L74.5 268.84 L74.8 267.87 L75.1 267.43 L75.4 267.52 L75.7 268.13 L76 269.28 L76.3 270.95 L76.6 273.13 L76.9 275.83 L77.2 279.04M90.6 622.55 L90.9 626.08 L91.2 629.12 L91.5 631.65 L91.8 633.67 L92.1 635.16 L92.4 636.13 L92.7 636.57 L93 636.48 L93.3 635.87 L93.6 634.72 L93.9 633.05 L94.2 630.87 L94.5 628.17 L94.8 624.96M108.2 281.45 L108.5 277.92 L108.8 274.88 L109.1 272.35 L109.4 270.33 L109.7 268.84 L110 267.87 L110.3 267.43 L110.6 267.52 L110.9 268.13 L111.2 269.28 L111.5 270.95 L111.8 273.13 L112.1 275.83 L112.4 279.04M125.8 622.55 L126.1 626.08 L126.4 629.12 L126.7 631.65 L127 633.67 L127.3 635.16 L127.6 636.13 L127.9 636.57 L128.2 636.48 L128.5 635.87 L128.8 634.72 L129.1 633.05 L129.4 630.87 L129.7 628.17 L130 624.96M143.4 281.45 L143.7 277.92 L144 274.88 L144.3 272.35 L144.6 270.33 L144.9 268.84 L145.2 267.87 L145.5 267.43 L145.8 267.52 L146.1 268.13 L146.4 269.28 L146.7 270.95 L147 273.13 L147.3 275.83 L147.6 279.04M161 622.55 L161.3 626.08 L161.6 629.12 L161.9 631.65 L162.2 633.67 L162.5 635.16 L162.8 636.13 L163.1 636.57 L163.4 636.48 L163.7 635.87 L164 634.72 L164.3 633.05 L164.6 630.87 L164.9 628.17 L165.2 624.96M178.6 281.45 L178.9 277.92 L179.2 274.88 L179.5 272.35 L179.8 270.33 L180.1 268.84 L180.4 267.87 L180.7 267.43 L181 267.52 L181.3 268.13 L181.6 269.28 L181.9 270.95 L182.2 273.13 L182.5 275.83 L182.8 279.04M196.2 622.55 L196.5 626.08 L196.8 629.12 L197.1 631.65 L197.4 633.67 L197.7 635.16 L198 636.13 L198.3 636.57 L198.6 636.48 L198.9 635.87 L199.2 634.72 L199.5 633.05 L199.8 630.87 L200.1 628.17 L200.4 624.96M213.8 281.45 L214.1 277.92 L214.4 274.88 L214.7 272.35 L215 270.33 L215.3 268.84 L215.6 267.87 L215.9 267.43 L216.2 267.52 L216.5 268.13 L216.8 269.28 L217.1 270.95 L217.4 273.13 L217.7 275.83 L218 279.04M231.4 622.55 L231.7 626.08 L232 629.12 L232.3 631.65 L232.6 633.67 L232.9 635.16 L233.2 636.13 L233.5 636.57 L233.8 636.48 L234.1 635.87 L234.4 634.72 L234.7 633.05 L235 630.87 L235.3 628.17 L235.6 624.96M249 281.45 L249.3 277.92 L249.6 274.88 L249.9 272.35 L250.2 270.33 L250.5 268.84 L250.8 267.87 L251.1 267.43 L251.4 267.52 L251.7 268.13 L252 269.28 L252.3 270.95 L252.6 273.13 L252.9 275.83 L253.2 279.04M266.6 622.55 L266.9 626.08 L267.2 629.12 L267.5 631.65 L267.8 633.67 L268.1 635.16 L268.4 636.13 L268.7 636.57 L269 636.48 L269.3 635.87 L269.6 634.72 L269.9 633.05 L270.2 630.87 L270.5 628.17 L270.8 624.96M284.2 281.45 L284.5 277.92 L284.8 274.88 L285.1 272.35 L285.4 270.33 L285.7 268.84 L286 267.87 L286.3 267.43 L286.6 267.52 L286.9 268.13 L287.2 269.28 L287.5 270.95 L287.8 273.13 L288.1 275.83 L288.4 279.04M301.8 622.55 L302.1 626.08 L302.4 629.12 L302.7 631.65 L303 633.67 L303.3 635.16 L303.6 636.13 L303.9 636.57 L304.2 636.48 L304.5 635.87 L304.8 634.72 L305.1 633.05 L305.4 630.87 L305.7 628.17 L306 624.96M319.4 281.45 L319.7 277.92 L320 274.88 L320.3 272.35 L320.6 270.33 L320.9 268.84 L321.2 267.87 L321.5 267.43 L321.8 267.52 L322.1 268.13 L322.4 269.28 L322.7 270.95 L323 273.13 L323.3 275.83 L323.6 279.04M337 622.55 L337.3 626.08 L337.6 629.12 L337.9 631.65 L338.2 633.67 L338.5 635.16 L338.8 636.13 L339.1 636.57 L339.4 636.48 L339.7 635.87 L340 634.72 L340.3 633.05 L340.6 630.87 L340.9 628.17 L341.2 624.96M354.6 281.45 L354.9 277.92 L355.2 274.88 L355.5 272.35 L355.8 270.33 L356.1 268.84 L356.4 267.87 L356.7 267.43 L357 267.52 L357.3 268.13 L357.6 269.28 L357.9 270.95 L358.2 273.13 L358.5 275.83 L358.8 279.04M372.2 622.55 L372.5 626.08 L372.8 629.12 L373.1 631.65 L373.4 633.67 L373.7 635.16 L374 636.13 L374.3 636.57 L374.6 636.48 L374.9 635.87 L375.2 634.72 L375.5 633.05 L375.8 630.87 L376.1 628.17 L376.4 624.96M389.8 281.45 L390.1 277.92 L390.4 274.88 L390.7 272.35 L391 270.33 L391.3 268.84 L391.6 267.87 L391.9 267.43 L392.2 267.52 L392.5 268.13 L392.8 269.28 L393.1 270.95 L393.4 273.13 L393.7 275.83 L394 279.04M407.4 622.55 L407.7 626.08 L408 629.12 L408.3 631.65 L408.6 633.67 L408.9 635.16 L409.2 636.13 L409.5 636.57 L409.8 636.48 L410.1 635.87 L410.4 634.72 L410.7 633.05 L411 630.87 L411.3 628.17 L411.6 624.96M425 281.45 L425.3 277.92 L425.6 274.88 L425.9 272.35 L426.2 270.33 L426.5 268.84 L426.8 267.87 L427.1 267.43 L427.4 267.52 L427.7 268.13 L428 269.28 L428.3 270.95 L428.6 273.13 L428.9 275.83 L429.2 279.04M442.6 622.55 L442.9 626.08 L443.2 629.12 L443.5 631.65 L443.8 633.67 L444.1 635.16 L444.4 636.13 L444.7 636.57 L445 636.48 L445.3 635.87 L445.6 634.72 L445.9 633.05 L446.2 630.87 L446.5 628.17 L446.8 624.96M460.2 281.45 L460.5 277.92 L460.8 274.88 L461.1 272.35 L461.4 270.33 L461.7 268.84 L462 267.87 L462.3 267.43 L462.6 267.52 L462.9 268.13 L463.2 269.28 L463.5 270.95 L463.8 273.13 L464.1 275.83 L464.4 279.04M477.8 622.55 L478.1 626.08 L478.4 629.12 L478.7 631.65 L479 633.67 L479.3 635.16 L479.6 636.13 L479.9 636.57 L480.2 636.48 L480.5 635.87 L480.8 634.72 L481.1 633.05 L481.4 630.87 L481.7 628.17 L482 624.96M495.4 281.45 L495.7 277.92 L496 274.88 L496.3 272.35 L496.6 270.33 L496.9 268.84 L497.2 267.87 L497.5 267.43 L497.8 267.52 L498.1 268.13 L498.4 269.28 L498.7 270.95 L499 273.13 L499.3 275.83 L499.6 279.04M513 622.55 L513.3 626.08 L513.6 629.12 L513.9 631.65 L514.2 633.67 L514.5 635.16 L514.8 636.13 L515.1 636.57 L515.4 636.48 L515.7 635.87 L516 634.72 L516.3 633.05 L516.6 630.87 L516.9 628.17 L517.2 624.96M530.6 281.45 L530.9 277.92 L531.2 274.88 L531.5 272.35 L531.8 270.33 L532.1 268.84 L532.4 267.87 L532.7 267.43 L533 267.52 L533.3 268.13 L533.6 269.28 L533.9 270.95 L534.2 273.13 L534.5 275.83 L534.8 279.04M548.2 622.55 L548.5 626.08 L548.8 629.12 L549.1 631.65 L549.4 633.67 L549.7 635.16 L550 636.13 L550.3 636.57 L550.6 636.48 L550.9 635.87 L551.2 634.72 L551.5 633.05 L551.8 630.87 L552.1 628.17 L552.4 624.96M565.8 281.45 L566.1 277.92 L566.4 274.88 L566.7 272.35 L567 270.33 L567.3 268.84 L567.6 267.87 L567.9 267.43 L568.2 267.52 L568.5 268.13 L568.8 269.28 L569.1 270.95 L569.4 273.13 L569.7 275.83 L570 279.04M583.4 622.55 L583.7 626.08 L584 629.12 L584.3 631.65 L584.6 633.67 L584.9 635.16 L585.2 636.13 L585.5 636.57 L585.8 636.48 L586.1 635.87 L586.4 634.72 L586.7 633.05 L587 630.87 L587.3 628.17 L587.6 624.96M601 281.45 L601.3 277.92 L601.6 274.88 L601.9 272.35 L602.2 270.33 L602.5 268.84 L602.8 267.87 L603.1 267.43 L603.4 267.52 L603.7 268.13 L604 269.28 L604.3 270.95 L604.6 273.13 L604.9 275.83 L605.2 279.04M618.6 622.55 L618.9 626.08 L619.2 629.12 L619.5 631.65 L619.8 633.67 L620.1 635.16 L620.4 636.13 L620.7 636.57 L621 636.48 L621.3 635.87 L621.6 634.72 L621.9 633.05 L622.2 630.87 L622.5 628.17 L622.8 624.96M636.2 281.45 L636.5 277.92 L636.8 274.88 L637.1 272.35 L637.4 270.33 L637.7 268.84 L638 267.87 L638.3 267.43 L638.6 267.52 L638.9 268.13 L639.2 269.28 L639.5 270.95 L639.8 273.13 L640.1 275.83 L640.4 279.04M653.8 622.55 L654.1 626.08 L654.4 629.12 L654.7 631.65 L655 633.67 L655.3 635.16 L655.6 636.13 L655.9 636.57 L656.2 636.48 L656.5 635.87 L656.8 634.72 L657.1 633.05 L657.4 630.87 L657.7 628.17 L658 624.96M671.4 281.45 L671.7 277.92 L672 274.88 L672.3 272.35 L672.6 270.33 L672.9 268.84 L673.2 267.87 L673.5 267.43 L673.8 267.52 L674.1 268.13 L674.4 269.28 L674.7 270.95 L675 273.13 L675.3 275.83 L675.6 279.04M689 622.55 L689.3 626.08 L689.6 629.12 L689.9 631.65 L690.2 633.67 L690.5 635.16 L690.8 636.13 L691.1 636.57 L691.4 636.48 L691.7 635.87 L692 634.72 L692.3 633.05 L692.6 630.87 L692.9 628.17 L693.2 624.96M706.6 281.45 L706.9 277.92 L707.2 274.88 L707.5 272.35 L707.8 270.33 L708.1 268.84 L708.4 267.87 L708.7 267.43 L709 267.52 L709.3 268.13 L709.6 269.28 L709.9 270.95 L710.2 273.13 L710.5 275.83 L710.8 279.04M724.2 622.55 L724.5 626.08 L724.8 629.12 L725.1 631.65 L725.4 633.67 L725.7 635.16 L726 636.13 L726.3 636.57 L726.6 636.48 L726.9 635.87 L727.2 634.72 L727.5 633.05 L727.8 630.87 L728.1 628.17 L728.4 624.96M741.8 281.45 L742.1 277.92 L742.4 274.88 L742.7 272.35 L743 270.33 L743.3 268.84 L743.6 267.87 L743.9 267.43 L744.2 267.52 L744.5 268.13 L744.8 269.28 L745.1 270.95 L745.4 273.13 L745.7 275.83 L746 279.04M759.4 622.55 L759.7 626.08 L760 629.12 L760.3 631.65 L760.6 633.67 L760.9 635.16 L761.2 636.13 L761.5 636.57 L761.8 636.48 L762.1 635.87 L762.4 634.72 L762.7 633.05 L763 630.87 L763.3 628.17 L763.6 624.96M777 281.45 L777.3 277.92 L777.6 274.88 L777.9 272.35 L778.2 270.33 L778.5 268.84 L778.8 267.87 L779.1 267.43 L779.4 267.52 L779.7 268.13 L780 269.28 L780.3 270.95 L780.6 273.13 L780.9 275.83 L781.2 279.04M794.6 622.55 L794.9 626.08 L795.2 629.12 L795.5 631.65 L795.8 633.67 L796.1 635.16 L796.4 636.13 L796.7 636.57 L797 636.48 L797.3 635.87 L797.6 634.72 L797.9 633.05 L798.2 630.87 L798.5 628.17 L798.8 624.96M812.2 281.45 L812.5 277.92 L812.8 274.88 L813.1 272.35 L813.4 270.33 L813.7 268.84 L814 267.87 L814.3 267.43 L814.6 267.52 L814.9 268.13 L815.2 269.28 L815.5 270.95 L815.8 273.13 L816.1 275.83 L816.4 279.04" stroke="#d4d42a" stroke-width="1.5" fill="none"/>
<path d="M13 432.27 L13.4 445.41 L13.8 458.59 L14.2 471.73 L14.6 484.78 L15 497.65 L15.4 510.3 L15.8 522.64 L16.2 534.63 L16.6 546.2 L17 557.28 L17.4 567.83 L17.8 577.79 L18.2 587.11 L18.6 595.74 L19 603.63 L19.4 610.76 L19.8 617.07 L20.2 622.55 L20.6 627.15 L21 630.87 L21.4 633.67 L21.8 635.54 L22.2 636.48 L22.6 636.48 L23 635.54 L23.4 633.67 L23.8 630.87 L24.2 627.15 L24.6 622.55 L25 617.07 L25.4 610.76 L25.8 603.63 L26.2 595.74 L26.6 587.11 L27 577.79 L27.4 567.83 L27.8 557.28 L28.2 546.2 L28.6 534.63 L29 522.64 L29.4 510.3 L29.8 497.65 L30.2 484.78 L30.6 471.73 L31 458.59 L31.4 445.41 L31.8 432.27 L32.2 419.22 L32.6 406.35 L33 393.7 L33.4 381.36 L33.8 369.37 L34.2 357.8 L34.6 346.72 L35 336.17 L35.4 326.21 L35.8 316.89 L36.2 308.26 L36.6 300.37 L37 293.24 L37.4 286.93 L37.8 281.45 L38.2 276.85 L38.6 273.13 L39 270.33 L39.4 268.46 L39.8 267.52 L40.2 267.52 L40.6 268.46 L41 270.33 L41.4 273.13 L41.8 276.85 L42.2 281.45 L42.6 286.93 L43 293.24 L43.4 300.37 L43.8 308.26 L44.2 316.89 L44.6 326.21 L45 336.17 L45.4 346.72 L45.8 357.8 L46.2 369.37 L46.6 381.36 L47 393.7 L47.4 406.35 L47.8 419.22 L48.2 432.27 L48.6 445.41 L49 458.59 L49.4 471.73 L49.8 484.78 L50.2 497.65 L50.6 510.3 L51 522.64 L51.4 534.63 L51.8 546.2 L52.2 557.28 L52.6 567.83 L53 577.79 L53.4 587.11 L53.8 595.74 L54.2 603.63 L54.6 610.76 L55 617.07 L55.4 622.55 L55.8 627.15 L56.2 630.87 L56.6 633.67 L57 635.54 L57.4 636.48 L57.8 636.48 L58.2 635.54 L58.6 633.67 L59 630.87 L59.4 627.15 L59.8 622.55 L60.2 617.07 L60.6 610.76 L61 603.63 L61.4 595.74 L61.8 587.11 L62.2 577.79 L62.6 567.83 L63 557.28 L63.4 546.2 L63.8 534.63 L64.2 522.64 L64.6 510.3 L65 497.65 L65.4 484.78 L65.8 471.73 L66.2 458.59 L66.6 445.41 L67 432.27 L67.4 419.22 L67.8 406.35 L68.2 393.7 L68.6 381.36 L69 369.37 L69.4 357.8 L69.8 346.72 L70.2 336.17 L70.6 326.21 L71 316.89 L71.4 308.26 L71.8 300.37 L72.2 293.24 L72.6 286.93 L73 281.45 L73.4 276.85 L73.8 273.13 L74.2 270.33 L74.6 268.46 L75 267.52 L75.4 267.52 L75.8 268.46 L76.2 270.33 L76.6 273.13 L77 276.85 L77.4 281.45 L77.8 286.93 L78.2 293.24 L78.6 300.37 L79 308.26 L79.4 316.89 L79.8 326.21 L80.2 336.17 L80.6 346.72 L81 357.8 L81.4 369.37 L81.8 381.36 L82.2 393.7 L82.6 406.35 L83 419.22 L83.4 432.27 L83.8 445.41 L84.2 458.59 L84.6 471.73 L85 484.78 L85.4 497.65 L85.8 510.3 L86.2 522.64 L86.6 534.63 L87 546.2 L87.4 557.28 L87.8 567.83 L88.2 577.79 L88.6 587.11 L89 595.74 L89.4 603.63 L89.8 610.76 L90.2 617.07 L90.6 622.55 L91 627.15 L91.4 630.87 L91.8 633.67 L92.2 635.54 L92.6 636.48 L93 636.48 L93.4 635.54 L93.8 633.67 L94.2 630.87 L94.6 627.15 L95 622.55 L95.4 617.07 L95.8 610.76 L96.2 603.63 L96.6 595.74 L97 587.11 L97.4 577.79 L97.8 567.83 L98.2 557.28 L98.6 546.2 L99 534.63 L99.4 522.64 L99.8 510.3 L100.2 497.65 L100.6 484.78 L101 471.73 L101.4 458.59 L101.8 445.41 L102.2 432.27 L102.6 419.22 L103 406.35 L103.4 393.7 L103.8 381.36 L104.2 369.37 L104.6 357.8 L105 346.72 L105.4 336.17 L105.8 326.21 L106.2 316.89 L106.6 308.26 L107 300.37 L107.4 293.24 L107.8 286.93 L108.2 281.45 L108.6 276.85 L109 273.13 L109.4 270.33 L109.8 268.46 L110.2 267.52 L110.6 267.52 L111 268.46 L111.4 270.33 L111.8 273.13 L112.2 276.85 L112.6 281.45 L113 286.93 L113.4 293.24 L113.8 300.37 L114.2 308.26 L114.6 316.89 L115 326.21 L115.4 336.17 L115.8 346.72 L116.2 357.8 L116.6 369.37 L117 381.36 L117.4 393.7 L117.8 406.35 L118.2 419.22 L118.6 432.27 L119 445.41 L119.4 458.59 L119.8 471.73 L120.2 484.78 L120.6 497.65 L121 510.3 L121.4 522.64 L121.8 534.63 L122.2 546.2 L122.6 557.28 L123 567.83 L123.4 577.79 L123.8 587.11 L124.2 595.74 L124.6 603.63 L125 610.76 L125.4 617.07 L125.8 622.55 L126.2 627.15 L126.6 630.87 L127 633.67 L127.4 635.54 L127.8 636.48 L128.2 636.48 L128.6 635.54 L129 633.67 L129.4 630.87 L129.8 627.15 L130.2 622.55 L130.6 617.07 L131 610.76 L131.4 603.63 L131.8 595.74 L132.2 587.11 L132.6 577.79 L133 567.83 L133.4 557.28 L133.8 546.2 L134.2 534.63 L134.6 522.64 L135 510.3 L135.4 497.65 L135.8 484.78 L136.2 471.73 L136.6 458.59 L137 445.41 L137.4 432.27 L137.8 419.22 L138.2 406.35 L138.6 393.7 L139 381.36 L139.4 369.37 L139.8 357.8 L140.2 346.72 L140.6 336.17 L141 326.21 L141.4 316.89 L141.8 308.26 L142.2 300.37 L142.6 293.24 L143 286.93 L143.4 281.45 L143.8 276.85 L144.2 273.13 L144.6 270.33 L145 268.46 L145.4 267.52 L145.8 267.52 L146.2 268.46 L146.6 270.33 L147 273.13 L147.4 276.85 L147.8 281.45 L148.2 286.93 L148.6 293.24 L149 300.37 L149.4 308.26 L149.8 316.89 L150.2 326.21 L150.6 336.17 L151 346.72 L151.4 357.8 L151.8 369.37 L152.2 381.36 L152.6 393.7 L153 406.35 L153.4 419.22 L153.8 432.27 L154.2 445.41 L154.6 458.59 L155 471.73 L155.4 484.78 L155.8 497.65 L156.2 510.3 L156.6 522.64 L157 534.63 L157.4 546.2 L157.8 557.28 L158.2 567.83 L158.6 577.79 L159 587.11 L159.4 595.74 L159.8 603.63 L160.2 610.76 L160.6 617.07 L161 622.55 L161.4 627.15 L161.8 630.87 L162.2 633.67 L162.6 635.54 L163 636.48 L163.4 636.48 L163.8 635.54 L164.2 633.67 L164.6 630.87 L165 627.15 L165.4 622.55 L165.8 617.07 L166.2 610.76 L166.6 603.63 L167 595.74 L167.4 587.11 L167.8 577.79 L168.2 567.83 L168.6 557.28 L169 546.2 L169.4 534.63 L169.8 522.64 L170.2 510.3 L170.6 497.65 L171 484.78 L171.4 471.73 L171.8 458.59 L172.2 445.41 L172.6 432.27 L173 419.22 L173.4 406.35 L173.8 393.7 L174.2 381.36 L174.6 369.37 L175 357.8 L175.4 346.72 L175.8 336.17 L176.2 326.21 L176.6 316.89 L177 308.26 L177.4 300.37 L177.8 293.24 L178.2 286.93 L178.6 281.45 L179 276.85 L179.4 273.13 L179.8 270.33 L180.2 268.46 L180.6 267.52 L181 267.52 L181.4 268.46 L181.8 270.33 L182.2 273.13 L182.6 276.85 L183 281.45 L183.4 286.93 L183.8 293.24 L184.2 300.37 L184.6 308.26 L185 316.89 L185.4 326.21 L185.8 336.17 L186.2 346.72 L186.6 357.8 L187 369.37 L187.4 381.36 L187.8 393.7 L188.2 406.35 L188.6 419.22 L189 432.27 L189.4 445.41 L189.8 458.59 L190.2 471.73 L190.6 484.78 L191 497.65 L191.4 510.3 L191.8 522.64 L192.2 534.63 L192.6 546.2 L193 557.28 L193.4 567.83 L193.8 577.79 L194.2 587.11 L194.6 595.74 L195 603.63 L195.4 610.76 L195.8 617.07 L196.2 622.55 L196.6 627.15 L197 630.87 L197.4 633.67 L197.8 635.54 L198.2 636.48 L198.6 636.48 L199 635.54 L199.4 633.67 L199.8 630.87 L200.2 627.15 L200.6 622.55 L201 617.07 L201.4 610.76 L201.8 603.63 L202.2 595.74 L202.6 587.11 L203 577.79 L203.4 567.83 L203.8 557.28 L204.2 546.2 L204.6 534.63 L205 522.64 L205.4 510.3 L205.8 497.65 L206.2 484.78 L206.6 471.73 L207 458.59 L207.4 445.41 L207.8 432.27 L208.2 419.22 L208.6 406.35 L209 393.7 L209.4 381.36 L209.8 369.37 L210.2 357.8 L210.6 346.72 L211 336.17 L211.4 326.21 L211.8 316.89 L212.2 308.26 L212.6 300.37 L213 293.24 L213.4 286.93 L213.8 281.45 L214.2 276.85 L214.6 273.13 L215 270.33 L215.4 268.46 L215.8 267.52 L216.2 267.52 L216.6 268.46 L217 270.33 L217.4 273.13 L217.8 276.85 L218.2 281.45 L218.6 286.93 L219 293.24 L219.4 300.37 L219.8 308.26 L220.2 316.89 L220.6 326.21 L221 336.17 L221.4 346.72 L221.8 357.8 L222.2 369.37 L222.6 381.36 L223 393.7 L223.4 406.35 L223.8 419.22 L224.2 432.27 L224.6 445.41 L225 458.59 L225.4 471.73 L225.8 484.78 L226.2 497.65 L226.6 510.3 L227 522.64 L227.4 534.63 L227.8 546.2 L228.2 557.28 L228.6 567.83 L229 577.79 L229.4 587.11 L229.8 595.74 L230.2 603.63 L230.6 610.76 L231 617.07 L231.4 622.55 L231.8 627.15 L232.2 630.87 L232.6 633.67 L233 635.54 L233.4 636.48 L233.8 636.48 L234.2 635.54 L234.6 633.67 L235 630.87 L235.4 627.15 L235.8 622.55 L236.2 617.07 L236.6 610.76 L237 603.63 L237.4 595.74 L237.8 587.11 L238.2 577.79 L238.6 567.83 L239 557.28 L239.4 546.2 L239.8 534.63 L240.2 522.64 L240.6 510.3 L241 497.65 L241.4 484.78 L241.8 471.73 L242.2 458.59 L242.6 445.41 L243 432.27 L243.4 419.22 L243.8 406.35 L244.2 393.7 L244.6 381.36 L245 369.37 L245.4 357.8 L245.8 346.72 L246.2 336.17 L246.6 326.21 L247 316.89 L247.4 308.26 L247.8 300.37 L248.2 293.24 L248.6 286.93 L249 281.45 L249.4 276.85 L249.8 273.13 L250.2 270.33 L250.6 268.46 L251 267.52 L251.4 267.52 L251.8 268.46 L252.2 270.33 L252.6 273.13 L253 276.85 L253.4 281.45 L253.8 286.93 L254.2 293.24 L254.6 300.37 L255 308.26 L255.4 316.89 L255.8 326.21 L256.2 336.17 L256.6 346.72 L257 357.8 L257.4 369.37 L257.8 381.36 L258.2 393.7 L258.6 406.35 L259 419.22 L259.4 432.27 L259.8 445.41 L260.2 458.59 L260.6 471.73 L261 484.78 L261.4 497.65 L261.8 510.3 L262.2 522.64 L262.6 534.63 L263 546.2 L263.4 557.28 L263.8 567.83 L264.2 577.79 L264.6 587.11 L265 595.74 L265.4 603.63 L265.8 610.76 L266.2 617.07 L266.6 622.55 L267 627.15 L267.4 630.87 L267.8 633.67 L268.2 635.54 L268.6 636.48 L269 636.48 L269.4 635.54 L269.8 633.67 L270.2 630.87 L270.6 627.15 L271 622.55 L271.4 617.07 L271.8 610.76 L272.2 603.63 L272.6 595.74 L273 587.11 L273.4 577.79 L273.8 567.83 L274.2 557.28 L274.6 546.2 L275 534.63 L275.4 522.64 L275.8 510.3 L276.2 497.65 L276.6 484.78 L277 471.73 L277.4 458.59 L277.8 445.41 L278.2 432.27 L278.6 419.22 L279 406.35 L279.4 393.7 L279.8 381.36 L280.2 369.37 L280.6 357.8 L281 346.72 L281.4 336.17 L281.8 326.21 L282.2 316.89 L282.6 308.26 L283 300.37 L283.4 293.24 L283.8 286.93 L284.2 281.45 L284.6 276.85 L285 273.13 L285.4 270.33 L285.8 268.46 L286.2 267.52 L286.6 267.52 L287 268.46 L287.4 270.33 L287.8 273.13 L288.2 276.85 L288.6 281.45 L289 286.93 L289.4 293.24 L289.8 300.37 L290.2 308.26 L290.6 316.89 L291 326.21 L291.4 336.17 L291.8 346.72 L292.2 357.8 L292.6 369.37 L293 381.36 L293.4 393.7 L293.8 406.35 L294.2 419.22 L294.6 432.27 L295 445.41 L295.4 458.59 L295.8 471.73 L296.2 484.78 L296.6 497.65 L297 510.3 L297.4 522.64 L297.8 534.63 L298.2 546.2 L298.6 557.28 L299 567.83 L299.4 577.79 L299.8 587.11 L300.2 595.74 L300.6 603.63 L301 610.76 L301.4 617.07 L301.8 622.55 L302.2 627.15 L302.6 630.87 L303 633.67 L303.4 635.54 L303.8 636.48 L304.2 636.48 L304.6 635.54 L305 633.67 L305.4 630.87 L305.8 627.15 L306.2 622.55 L306.6 617.07 L307 610.76 L307.4 603.63 L307.8 595.74 L308.2 587.11 L308.6 577.79 L309 567.83 L309.4 557.28 L309.8 546.2 L310.2 534.63 L310.6 522.64 L311 510.3 L311.4 497.65 L311.8 484.78 L312.2 471.73 L312.6 458.59 L313 445.41 L313.4 432.27 L313.8 419.22 L314.2 406.35 L314.6 393.7 L315 381.36 L315.4 369.37 L315.8 357.8 L316.2 346.72 L316.6 336.17 L317 326.21 L317.4 316.89 L317.8 308.26 L318.2 300.37 L318.6 293.24 L319 286.93 L319.4 281.45 L319.8 276.85 L320.2 273.13 L320.6 270.33 L321 268.46 L321.4 267.52 L321.8 267.52 L322.2 268.46 L322.6 270.33 L323 273.13 L323.4 276.85 L323.8 281.45 L324.2 286.93 L324.6 293.24 L325 300.37 L325.4 308.26 L325.8 316.89 L326.2 326.21 L326.6 336.17 L327 346.72 L327.4 357.8 L327.8 369.37 L328.2 381.36 L328.6 393.7 L329 406.35 L329.4 419.22 L329.8 432.27 L330.2 445.41 L330.6 458.59 L331 471.73 L331.4 484.78 L331.8 497.65 L332.2 510.3 L332.6 522.64 L333 534.63 L333.4 546.2 L333.8 557.28 L334.2 567.83 L334.6 577.79 L335 587.11 L335.4 595.74 L335.8 603.63 L336.2 610.76 L336.6 617.07 L337 622.55 L337.4 627.15 L337.8 630.87 L338.2 633.67 L338.6 635.54 L339 636.48 L339.4 636.48 L339.8 635.54 L340.2 633.67 L340.6 630.87 L341 627.15 L341.4 622.55 L341.8 617.07 L342.2 610.76 L342.6 603.63 L343 595.74 L343.4 587.11 L343.8 577.79 L344.2 567.83 L344.6 557.28 L345 546.2 L345.4 534.63 L345.8 522.64 L346.2 510.3 L346.6 497.65 L347 484.78 L347.4 471.73 L347.8 458.59 L348.2 445.41 L348.6 432.27 L349 419.22 L349.4 406.35 L349.8 393.7 L350.2 381.36 L350.6 369.37 L351 357.8 L351.4 346.72 L351.8 336.17 L352.2 326.21 L352.6 316.89 L353 308.26 L353.4 300.37 L353.8 293.24 L354.2 286.93 L354.6 281.45 L355 276.85 L355.4 273.13 L355.8 270.33 L356.2 268.46 L356.6 267.52 L357 267.52 L357.4 268.46 L357.8 270.33 L358.2 273.13 L358.6 276.85 L359 281.45 L359.4 286.93 L359.8 293.24 L360.2 300.37 L360.6 308.26 L361 316.89 L361.4 326.21 L361.8 336.17 L362.2 346.72 L362.6 357.8 L363 369.37 L363.4 381.36 L363.8 393.7 L364.2 406.35 L364.6 419.22 L365 432.27 L365.4 445.41 L365.8 458.59 L366.2 471.73 L366.6 484.78 L367 497.65 L367.4 510.3 L367.8 522.64 L368.2 534.63 L368.6 546.2 L369 557.28 L369.4 567.83 L369.8 577.79 L370.2 587.11 L370.6 595.74 L371 603.63 L371.4 610.76 L371.8 617.07 L372.2 622.55 L372.6 627.15 L373 630.87 L373.4 633.67 L373.8 635.54 L374.2 636.48 L374.6 636.48 L375 635.54 L375.4 633.67 L375.8 630.87 L376.2 627.15 L376.6 622.55 L377 617.07 L377.4 610.76 L377.8 603.63 L378.2 595.74 L378.6 587.11 L379 577.79 L379.4 567.83 L379.8 557.28 L380.2 546.2 L380.6 534.63 L381 522.64 L381.4 510.3 L381.8 497.65 L382.2 484.78 L382.6 471.73 L383 458.59 L383.4 445.41 L383.8 432.27 L384.2 419.22 L384.6 406.35 L385 393.7 L385.4 381.36 L385.8 369.37 L386.2 357.8 L386.6 346.72 L387 336.17 L387.4 326.21 L387.8 316.89 L388.2 308.26 L388.6 300.37 L389 293.24 L389.4 286.93 L389.8 281.45 L390.2 276.85 L390.6 273.13 L391 270.33 L391.4 268.46 L391.8 267.52 L392.2 267.52 L392.6 268.46 L393 270.33 L393.4 273.13 L393.8 276.85 L394.2 281.45 L394.6 286.93 L395 293.24 L395.4 300.37 L395.8 308.26 L396.2 316.89 L396.6 326.21 L397 336.17 L397.4 346.72 L397.8 357.8 L398.2 369.37 L398.6 381.36 L399 393.7 L399.4 406.35 L399.8 419.22 L400.2 432.27 L400.6 445.41 L401 458.59 L401.4 471.73 L401.8 484.78 L402.2 497.65 L402.6 510.3 L403 522.64 L403.4 534.63 L403.8 546.2 L404.2 557.28 L404.6 567.83 L405 577.79 L405.4 587.11 L405.8 595.74 L406.2 603.63 L406.6 610.76 L407 617.07 L407.4 622.55 L407.8 627.15 L408.2 630.87 L408.6 633.67 L409 635.54 L409.4 636.48 L409.8 636.48 L410.2 635.54 L410.6 633.67 L411 630.87 L411.4 627.15 L411.8 622.55 L412.2 617.07 L412.6 610.76 L413 603.63 L413.4 595.74 L413.8 587.11 L414.2 577.79 L414.6 567.83 L415 557.28 L415.4 546.2 L415.8 534.63 L416.2 522.64 L416.6 510.3 L417 497.65 L417.4 484.78 L417.8 471.73 L418.2 458.59 L418.6 445.41 L419 432.27 L419.4 419.22 L419.8 406.35 L420.2 393.7 L420.6 381.36 L421 369.37 L421.4 357.8 L421.8 346.72 L422.2 336.17 L422.6 326.21 L423 316.89 L423.4 308.26 L423.8 300.37 L424.2 293.24 L424.6 286.93 L425 281.45 L425.4 276.85 L425.8 273.13 L426.2 270.33 L426.6 268.46 L427 267.52 L427.4 267.52 L427.8 268.46 L428.2 270.33 L428.6 273.13 L429 276.85 L429.4 281.45 L429.8 286.93 L430.2 293.24 L430.6 300.37 L431 308.26 L431.4 316.89 L431.8 326.21 L432.2 336.17 L432.6 346.72 L433 357.8 L433.4 369.37 L433.8 381.36 L434.2 393.7 L434.6 406.35 L435 419.22 L435.4 432.27 L435.8 445.41 L436.2 458.59 L436.6 471.73 L437 484.78 L437.4 497.65 L437.8 510.3 L438.2 522.64 L438.6 534.63 L439 546.2 L439.4 557.28 L439.8 567.83 L440.2 577.79 L440.6 587.11 L441 595.74 L441.4 603.63 L441.8 610.76 L442.2 617.07 L442.6 622.55 L443 627.15 L443.4 630.87 L443.8 633.67 L444.2 635.54 L444.6 636.48 L445 636.48 L445.4 635.54 L445.8 633.67 L446.2 630.87 L446.6 627.15 L447 622.55 L447.4 617.07 L447.8 610.76 L448.2 603.63 L448.6 595.74 L449 587.11 L449.4 577.79 L449.8 567.83 L450.2 557.28 L450.6 546.2 L451 534.63 L451.4 522.64 L451.8 510.3 L452.2 497.65 L452.6 484.78 L453 471.73 L453.4 458.59 L453.8 445.41 L454.2 432.27 L454.6 419.22 L455 406.35 L455.4 393.7 L455.8 381.36 L456.2 369.37 L456.6 357.8 L457 346.72 L457.4 336.17 L457.8 326.21 L458.2 316.89 L458.6 308.26 L459 300.37 L459.4 293.24 L459.8 286.93 L460.2 281.45 L460.6 276.85 L461 273.13 L461.4 270.33 L461.8 268.46 L462.2 267.52 L462.6 267.52 L463 268.46 L463.4 270.33 L463.8 273.13 L464.2 276.85 L464.6 281.45 L465 286.93 L465.4 293.24 L465.8 300.37 L466.2 308.26 L466.6 316.89 L467 326.21 L467.4 336.17 L467.8 346.72 L468.2 357.8 L468.6 369.37 L469 381.36 L469.4 393.7 L469.8 406.35 L470.2 419.22 L470.6 432.27 L471 445.41 L471.4 458.59 L471.8 471.73 L472.2 484.78 L472.6 497.65 L473 510.3 L473.4 522.64 L473.8 534.63 L474.2 546.2 L474.6 557.28 L475 567.83 L475.4 577.79 L475.8 587.11 L476.2 595.74 L476.6 603.63 L477 610.76 L477.4 617.07 L477.8 622.55 L478.2 627.15 L478.6 630.87 L479 633.67 L479.4 635.54 L479.8 636.48 L480.2 636.48 L480.6 635.54 L481 633.67 L481.4 630.87 L481.8 627.15 L482.2 622.55 L482.6 617.07 L483 610.76 L483.4 603.63 L483.8 595.74 L484.2 587.11 L484.6 577.79 L485 567.83 L485.4 557.28 L485.8 546.2 L486.2 534.63 L486.6 522.64 L487 510.3 L487.4 497.65 L487.8 484.78 L488.2 471.73 L488.6 458.59 L489 445.41 L489.4 432.27 L489.8 419.22 L490.2 406.35 L490.6 393.7 L491 381.36 L491.4 369.37 L491.8 357.8 L492.2 346.72 L492.6 336.17 L493 326.21 L493.4 316.89 L493.8 308.26 L494.2 300.37 L494.6 293.24 L495 286.93 L495.4 281.45 L495.8 276.85 L496.2 273.13 L496.6 270.33 L497 268.46 L497.4 267.52 L497.8 267.52 L498.2 268.46 L498.6 270.33 L499 273.13 L499.4 276.85 L499.8 281.45 L500.2 286.93 L500.6 293.24 L501 300.37 L501.4 308.26 L501.8 316.89 L502.2 326.21 L502.6 336.17 L503 346.72 L503.4 357.8 L503.8 369.37 L504.2 381.36 L504.6 393.7 L505 406.35 L505.4 419.22 L505.8 432.27 L506.2 445.41 L506.6 458.59 L507 471.73 L507.4 484.78 L507.8 497.65 L508.2 510.3 L508.6 522.64 L509 534.63 L509.4 546.2 L509.8 557.28 L510.2 567.83 L510.6 577.79 L511 587.11 L511.4 595.74 L511.8 603.63 L512.2 610.76 L512.6 617.07 L513 622.55 L513.4 627.15 L513.8 630.87 L514.2 633.67 L514.6 635.54 L515 636.48 L515.4 636.48 L515.8 635.54 L516.2 633.67 L516.6 630.87 L517 627.15 L517.4 622.55 L517.8 617.07 L518.2 610.76 L518.6 603.63 L519 595.74 L519.4 587.11 L519.8 577.79 L520.2 567.83 L520.6 557.28 L521 546.2 L521.4 534.63 L521.8 522.64 L522.2 510.3 L522.6 497.65 L523 484.78 L523.4 471.73 L523.8 458.59 L524.2 445.41 L524.6 432.27 L525 419.22 L525.4 406.35 L525.8 393.7 L526.2 381.36 L526.6 369.37 L527 357.8 L527.4 346.72 L527.8 336.17 L528.2 326.21 L528.6 316.89 L529 308.26 L529.4 300.37 L529.8 293.24 L530.2 286.93 L530.6 281.45 L531 276.85 L531.4 273.13 L531.8 270.33 L532.2 268.46 L532.6 267.52 L533 267.52 L533.4 268.46 L533.8 270.33 L534.2 273.13 L534.6 276.85 L535 281.45 L535.4 286.93 L535.8 293.24 L536.2 300.37 L536.6 308.26 L537 316.89 L537.4 326.21 L537.8 336.17 L538.2 346.72 L538.6 357.8 L539 369.37 L539.4 381.36 L539.8 393.7 L540.2 406.35 L540.6 419.22 L541 432.27 L541.4 445.41 L541.8 458.59 L542.2 471.73 L542.6 484.78 L543 497.65 L543.4 510.3 L543.8 522.64 L544.2 534.63 L544.6 546.2 L545 557.28 L545.4 567.83 L545.8 577.79 L546.2 587.11 L546.6 595.74 L547 603.63 L547.4 610.76 L547.8 617.07 L548.2 622.55 L548.6 627.15 L549 630.87 L549.4 633.67 L549.8 635.54 L550.2 636.48 L550.6 636.48 L551 635.54 L551.4 633.67 L551.8 630.87 L552.2 627.15 L552.6 622.55 L553 617.07 L553.4 610.76 L553.8 603.63 L554.2 595.74 L554.6 587.11 L555 577.79 L555.4 567.83 L555.8 557.28 L556.2 546.2 L556.6 534.63 L557 522.64 L557.4 510.3 L557.8 497.65 L558.2 484.78 L558.6 471.73 L559 458.59 L559.4 445.41 L559.8 432.27 L560.2 419.22 L560.6 406.35 L561 393.7 L561.4 381.36 L561.8 369.37 L562.2 357.8 L562.6 346.72 L563 336.17 L563.4 326.21 L563.8 316.89 L564.2 308.26 L564.6 300.37 L565 293.24 L565.4 286.93 L565.8 281.45 L566.2 276.85 L566.6 273.13 L567 270.33 L567.4 268.46 L567.8 267.52 L568.2 267.52 L568.6 268.46 L569 270.33 L569.4 273.13 L569.8 276.85 L570.2 281.45 L570.6 286.93 L571 293.24 L571.4 300.37 L571.8 308.26 L572.2 316.89 L572.6 326.21 L573 336.17 L573.4 346.72 L573.8 357.8 L574.2 369.37 L574.6 381.36 L575 393.7 L575.4 406.35 L575.8 419.22 L576.2 432.27 L576.6 445.41 L577 458.59 L577.4 471.73 L577.8 484.78 L578.2 497.65 L578.6 510.3 L579 522.64 L579.4 534.63 L579.8 546.2 L580.2 557.28 L580.6 567.83 L581 577.79 L581.4 587.11 L581.8 595.74 L582.2 603.63 L582.6 610.76 L583 617.07 L583.4 622.55 L583.8 627.15 L584.2 630.87 L584.6 633.67 L585 635.54 L585.4 636.48 L585.8 636.48 L586.2 635.54 L586.6 633.67 L587 630.87 L587.4 627.15 L587.8 622.55 L588.2 617.07 L588.6 610.76 L589 603.63 L589.4 595.74 L589.8 587.11 L590.2 577.79 L590.6 567.83 L591 557.28 L591.4 546.2 L591.8 534.63 L592.2 522.64 L592.6 510.3 L593 497.65 L593.4 484.78 L593.8 471.73 L594.2 458.59 L594.6 445.41 L595 432.27 L595.4 419.22 L595.8 406.35 L596.2 393.7 L596.6 381.36 L597 369.37 L597.4 357.8 L597.8 346.72 L598.2 336.17 L598.6 326.21 L599 316.89 L599.4 308.26 L599.8 300.37 L600.2 293.24 L600.6 286.93 L601 281.45 L601.4 276.85 L601.8 273.13 L602.2 270.33 L602.6 268.46 L603 267.52 L603.4 267.52 L603.8 268.46 L604.2 270.33 L604.6 273.13 L605 276.85 L605.4 281.45 L605.8 286.93 L606.2 293.24 L606.6 300.37 L607 308.26 L607.4 316.89 L607.8 326.21 L608.2 336.17 L608.6 346.72 L609 357.8 L609.4 369.37 L609.8 381.36 L610.2 393.7 L610.6 406.35 L611 419.22 L611.4 432.27 L611.8 445.41 L612.2 458.59 L612.6 471.73 L613 484.78 L613.4 497.65 L613.8 510.3 L614.2 522.64 L614.6 534.63 L615 546.2 L615.4 557.28 L615.8 567.83 L616.2 577.79 L616.6 587.11 L617 595.74 L617.4 603.63 L617.8 610.76 L618.2 617.07 L618.6 622.55 L619 627.15 L619.4 630.87 L619.8 633.67 L620.2 635.54 L620.6 636.48 L621 636.48 L621.4 635.54 L621.8 633.67 L622.2 630.87 L622.6 627.15 L623 622.55 L623.4 617.07 L623.8 610.76 L624.2 603.63 L624.6 595.74 L625 587.11 L625.4 577.79 L625.8 567.83 L626.2 557.28 L626.6 546.2 L627 534.63 L627.4 522.64 L627.8 510.3 L628.2 497.65 L628.6 484.78 L629 471.73 L629.4 458.59 L629.8 445.41 L630.2 432.27 L630.6 419.22 L631 406.35 L631.4 393.7 L631.8 381.36 L632.2 369.37 L632.6 357.8 L633 346.72 L633.4 336.17 L633.8 326.21 L634.2 316.89 L634.6 308.26 L635 300.37 L635.4 293.24 L635.8 286.93 L636.2 281.45 L636.6 276.85 L637 273.13 L637.4 270.33 L637.8 268.46 L638.2 267.52 L638.6 267.52 L639 268.46 L639.4 270.33 L639.8 273.13 L640.2 276.85 L640.6 281.45 L641 286.93 L641.4 293.24 L641.8 300.37 L642.2 308.26 L642.6 316.89 L643 326.21 L643.4 336.17 L643.8 346.72 L644.2 357.8 L644.6 369.37 L645 381.36 L645.4 393.7 L645.8 406.35 L646.2 419.22 L646.6 432.27 L647 445.41 L647.4 458.59 L647.8 471.73 L648.2 484.78 L648.6 497.65 L649 510.3 L649.4 522.64 L649.8 534.63 L650.2 546.2 L650.6 557.28 L651 567.83 L651.4 577.79 L651.8 587.11 L652.2 595.74 L652.6 603.63 L653 610.76 L653.4 617.07 L653.8 622.55 L654.2 627.15 L654.6 630.87 L655 633.67 L655.4 635.54 L655.8 636.48 L656.2 636.48 L656.6 635.54 L657 633.67 L657.4 630.87 L657.8 627.15 L658.2 622.55 L658.6 617.07 L659 610.76 L659.4 603.63 L659.8 595.74 L660.2 587.11 L660.6 577.79 L661 567.83 L661.4 557.28 L661.8 546.2 L662.2 534.63 L662.6 522.64 L663 510.3 L663.4 497.65 L663.8 484.78 L664.2 471.73 L664.6 458.59 L665 445.41 L665.4 432.27 L665.8 419.22 L666.2 406.35 L666.6 393.7 L667 381.36 L667.4 369.37 L667.8 357.8 L668.2 346.72 L668.6 336.17 L669 326.21 L669.4 316.89 L669.8 308.26 L670.2 300.37 L670.6 293.24 L671 286.93 L671.4 281.45 L671.8 276.85 L672.2 273.13 L672.6 270.33 L673 268.46 L673.4 267.52 L673.8 267.52 L674.2 268.46 L674.6 270.33 L675 273.13 L675.4 276.85 L675.8 281.45 L676.2 286.93 L676.6 293.24 L677 300.37 L677.4 308.26 L677.8 316.89 L678.2 326.21 L678.6 336.17 L679 346.72 L679.4 357.8 L679.8 369.37 L680.2 381.36 L680.6 393.7 L681 406.35 L681.4 419.22 L681.8 432.27 L682.2 445.41 L682.6 458.59 L683 471.73 L683.4 484.78 L683.8 497.65 L684.2 510.3 L684.6 522.64 L685 534.63 L685.4 546.2 L685.8 557.28 L686.2 567.83 L686.6 577.79 L687 587.11 L687.4 595.74 L687.8 603.63 L688.2 610.76 L688.6 617.07 L689 622.55 L689.4 627.15 L689.8 630.87 L690.2 633.67 L690.6 635.54 L691 636.48 L691.4 636.48 L691.8 635.54 L692.2 633.67 L692.6 630.87 L693 627.15 L693.4 622.55 L693.8 617.07 L694.2 610.76 L694.6 603.63 L695 595.74 L695.4 587.11 L695.8 577.79 L696.2 567.83 L696.6 557.28 L697 546.2 L697.4 534.63 L697.8 522.64 L698.2 510.3 L698.6 497.65 L699 484.78 L699.4 471.73 L699.8 458.59 L700.2 445.41 L700.6 432.27 L701 419.22 L701.4 406.35 L701.8 393.7 L702.2 381.36 L702.6 369.37 L703 357.8 L703.4 346.72 L703.8 336.17 L704.2 326.21 L704.6 316.89 L705 308.26 L705.4 300.37 L705.8 293.24 L706.2 286.93 L706.6 281.45 L707 276.85 L707.4 273.13 L707.8 270.33 L708.2 268.46 L708.6 267.52 L709 267.52 L709.4 268.46 L709.8 270.33 L710.2 273.13 L710.6 276.85 L711 281.45 L711.4 286.93 L711.8 293.24 L712.2 300.37 L712.6 308.26 L713 316.89 L713.4 326.21 L713.8 336.17 L714.2 346.72 L714.6 357.8 L715 369.37 L715.4 381.36 L715.8 393.7 L716.2 406.35 L716.6 419.22 L717 432.27 L717.4 445.41 L717.8 458.59 L718.2 471.73 L718.6 484.78 L719 497.65 L719.4 510.3 L719.8 522.64 L720.2 534.63 L720.6 546.2 L721 557.28 L721.4 567.83 L721.8 577.79 L722.2 587.11 L722.6 595.74 L723 603.63 L723.4 610.76 L723.8 617.07 L724.2 622.55 L724.6 627.15 L725 630.87 L725.4 633.67 L725.8 635.54 L726.2 636.48 L726.6 636.48 L727 635.54 L727.4 633.67 L727.8 630.87 L728.2 627.15 L728.6 622.55 L729 617.07 L729.4 610.76 L729.8 603.63 L730.2 595.74 L730.6 587.11 L731 577.79 L731.4 567.83 L731.8 557.28 L732.2 546.2 L732.6 534.63 L733 522.64 L733.4 510.3 L733.8 497.65 L734.2 484.78 L734.6 471.73 L735 458.59 L735.4 445.41 L735.8 432.27 L736.2 419.22 L736.6 406.35 L737 393.7 L737.4 381.36 L737.8 369.37 L738.2 357.8 L738.6 346.72 L739 336.17 L739.4 326.21 L739.8 316.89 L740.2 308.26 L740.6 300.37 L741 293.24 L741.4 286.93 L741.8 281.45 L742.2 276.85 L742.6 273.13 L743 270.33 L743.4 268.46 L743.8 267.52 L744.2 267.52 L744.6 268.46 L745 270.33 L745.4 273.13 L745.8 276.85 L746.2 281.45 L746.6 286.93 L747 293.24 L747.4 300.37 L747.8 308.26 L748.2 316.89 L748.6 326.21 L749 336.17 L749.4 346.72 L749.8 357.8 L750.2 369.37 L750.6 381.36 L751 393.7 L751.4 406.35 L751.8 419.22 L752.2 432.27 L752.6 445.41 L753 458.59 L753.4 471.73 L753.8 484.78 L754.2 497.65 L754.6 510.3 L755 522.64 L755.4 534.63 L755.8 546.2 L756.2 557.28 L756.6 567.83 L757 577.79 L757.4 587.11 L757.8 595.74 L758.2 603.63 L758.6 610.76 L759 617.07 L759.4 622.55 L759.8 627.15 L760.2 630.87 L760.6 633.67 L761 635.54 L761.4 636.48 L761.8 636.48 L762.2 635.54 L762.6 633.67 L763 630.87 L763.4 627.15 L763.8 622.55 L764.2 617.07 L764.6 610.76 L765 603.63 L765.4 595.74 L765.8 587.11 L766.2 577.79 L766.6 567.83 L767 557.28 L767.4 546.2 L767.8 534.63 L768.2 522.64 L768.6 510.3 L769 497.65 L769.4 484.78 L769.8 471.73 L770.2 458.59 L770.6 445.41 L771 432.27 L771.4 419.22 L771.8 406.35 L772.2 393.7 L772.6 381.36 L773 369.37 L773.4 357.8 L773.8 346.72 L774.2 336.17 L774.6 326.21 L775 316.89 L775.4 308.26 L775.8 300.37 L776.2 293.24 L776.6 286.93 L777 281.45 L777.4 276.85 L777.8 273.13 L778.2 270.33 L778.6 268.46 L779 267.52 L779.4 267.52 L779.8 268.46 L780.2 270.33 L780.6 273.13 L781 276.85 L781.4 281.45 L781.8 286.93 L782.2 293.24 L782.6 300.37 L783 308.26 L783.4 316.89 L783.8 326.21 L784.2 336.17 L784.6 346.72 L785 357.8 L785.4 369.37 L785.8 381.36 L786.2 393.7 L786.6 406.35 L787 419.22 L787.4 432.27 L787.8 445.41 L788.2 458.59 L788.6 471.73 L789 484.78 L789.4 497.65 L789.8 510.3 L790.2 522.64 L790.6 534.63 L791 546.2 L791.4 557.28 L791.8 567.83 L792.2 577.79 L792.6 587.11 L793 595.74 L793.4 603.63 L793.8 610.76 L794.2 617.07 L794.6 622.55 L795 627.15 L795.4 630.87 L795.8 633.67 L796.2 635.54 L796.6 636.48 L797 636.48 L797.4 635.54 L797.8 633.67 L798.2 630.87 L798.6 627.15 L799 622.55 L799.4 617.07 L799.8 610.76 L800.2 603.63 L800.6 595.74 L801 587.11 L801.4 577.79 L801.8 567.83 L802.2 557.28 L802.6 546.2 L803 534.63 L803.4 522.64 L803.8 510.3 L804.2 497.65 L804.6 484.78 L805 471.73 L805.4 458.59 L805.8 445.41 L806.2 432.27 L806.6 419.22 L807 406.35 L807.4 393.7 L807.8 381.36 L808.2 369.37 L808.6 357.8 L809 346.72 L809.4 336.17 L809.8 326.21 L810.2 316.89 L810.6 308.26 L811 300.37 L811.4 293.24 L811.8 286.93 L812.2 281.45 L812.6 276.85 L813 273.13 L813.4 270.33 L813.8 268.46 L814.2 267.52 L814.6 267.52 L815 268.46 L815.4 270.33 L815.8 273.13 L816.2 276.85 L816.6 281.45 L817 286.93" stroke="#b82c66" stroke-width="1.3" fill="none" stroke-dasharray="1.3 14"/>
<path d="M39 267.1h2M74.2 267.1h2M109.4 267.1h2M144.6 267.1h2M179.8 267.1h2M215 267.1h2M250.2 267.1h2M285.4 267.1h2M320.6 267.1h2M355.8 267.1h2M391 267.1h2M426.2 267.1h2M461.4 267.1h2M496.6 267.1h2M531.8 267.1h2M567 267.1h2M602.2 267.1h2M637.4 267.1h2M672.6 267.1h2M707.8 267.1h2M743 267.1h2M778.2 267.1h2M813.4 267.1h2" stroke="#ff20a0" stroke-width="2.2" fill="none"/>
</g>
<g clip-path="url(#pc2)">
<path d="M15.3 398.7 L16 406.7 L17 407.67 L18 410 L18.7 418.7 L19.3 453 L20.5 462 L22 474.7 L23.3 486.7 L24 490.7 L25.1 488.58 L26.2 485.9 L27.3 484 L27.6 370 L28 354 L28 298 L29.3 298 L29.3 278 L30 278 L30 262 L31.35 260.92 L32.7 259.3 L33.7 261.63 L34.7 263.3 L35 332.7 L36 370 L36.7 457 L37.3 470 L37.5 488 L38.7 490 L40 492 L41 492.87 L42 496 L40.7 509 L41.85 509.73 L43 513.88 L44.15 514.37 L45.3 517 L46.7 474.7 L47.8 468.68 L48.9 465.32 L50 458.7 L51.35 466.62 L52.7 474.7 L54 489 L55.3 493 L56.65 490.72 L58 486.7 L59 490.64 L60 494.7 L61.1 497.73 L62.2 499.12 L63.3 502.7 L64.3 493.05 L65.3 482.7 L66.43 478.76 L67.57 472.96 L68.7 468 L70 474.63 L71.3 480 L72.7 496 L74 493.8 L75.3 490.7 L76.65 497.57 L78 506.7 L79 496.67 L80 485.3 L81.05 481.1 L82.1 475.92 L83.15 470.78 L84.2 468.52 L85.25 463.06 L86.3 458.7 L87.3 465.59 L88.3 472.33 L89.3 478.23 L90.3 484 L91.3 486.77 L92.3 487.08 L93.3 489.81 L94.3 490.7 L95.3 489.86 L96.3 489.3 L97.3 483.78 L98.3 476 L99.3 476.99 L100.3 476 L101.7 464 L102.7 460.6 L103.7 459.3 L105 466.05 L106.3 474.7 L107 490.7 L108 485.26 L109 481.3 L110.35 484.51 L111.7 485.3 L112.7 487.83 L113.7 490.7 L115 500 L116.3 520 L117.7 498.7 L119 496.33 L120.3 493.3 L121.65 497.48 L123 502.7 L124.3 510.7 L125.3 498.02 L126.3 485.3 L127.65 479 L129 473.3 L130 476.26 L131 480 L132 485.57 L133 490.7 L134.3 493.3 L135.3 483.52 L136.3 473.3 L137.3 471.7 L138.3 468 L139.3 477.82 L140.3 486.7 L141.3 494.47 L142.3 500 L143.3 502.93 L144.3 504 L145.7 521.3 L145.9 541.3 L146.3 521 L147 496 L148 491.28 L149 484 L150.35 489.1 L151.7 493.3 L152.3 509.3 L153.3 505.12 L154.3 502.7 L155.3 490.94 L156.3 477.3 L157.43 480.31 L158.57 481.95 L159.7 482.7 L160.85 480.88 L162 478.7 L163 481.91 L164 484 L165.3 497.3 L166.7 496 L168 477.3 L169.1 477.45 L170.2 479.96 L171.3 480 L172.3 484.19 L173.3 488 L174.65 488.09 L176 489.3 L177 487.84 L178 489.57 L179 489.6 L180 488 L181 487.61 L182 490.13 L183 489.79 L184 490.7 L185.35 491.09 L186.7 493.3 L187.7 494.11 L188.7 496 L190 473.3 L191.3 466 L192.3 467.7 L193.3 468 L194 473.3 L195 471.97 L196 468.7 L197 469.66 L198 473.3 L199 473.97 L200 477.3 L201.35 478.57 L202.7 478.7 L203.7 480.26 L204.7 482.7 L206 493.3 L207 492.29 L208 489.3 L209.35 494.55 L210.7 497.3 L211.7 488.66 L212.7 480 L214 477.65 L215.3 472.7 L216.65 475.21 L218 478.7 L219.7 486.7 L221 480.25 L222.3 476 L224 474.7 L225.7 484 L226.85 484.91 L228 485.3 L229.15 489.43 L230.3 496 L231.7 521.3 L232.7 507.86 L233.7 496 L235 490.7 L236 492.46 L237 494.7 L238 486.99 L239 478.7 L240.35 475.81 L241.7 474.7 L242.7 473.51 L243.7 475.66 L244.7 474.22 L245.7 474.7 L246.8 478.56 L247.9 481.06 L249 482.7 L250 479.03 L251 476 L252.1 474.33 L253.2 472.92 L254.3 471.3 L255.3 478.67 L256.3 485.3 L257 500 L258.3 476 L259.3 470.25 L260.3 464 L261.3 468.15 L262.3 472 L263.3 481.66 L264.3 490.7 L265.3 493.15 L266.3 493.3 L267.7 505.3 L268.3 513.3 L269 493.3 L270 492.22 L271 490.92 L272 490" stroke="#e8661e" stroke-width="1.0" fill="none" stroke-linejoin="round"/>
<path d="M620 500 L621.1 501.91 L622.2 501.98 L623.3 504 L624.7 521.3 L625.7 508.13 L626.7 496 L627.7 499.89 L628.7 501.3 L630 494.7 L631.35 496.75 L632.7 498.7 L634 518.7 L635.3 485.3 L636.65 474.13 L638 462.7 L639 463.43 L640 466.7 L641.35 481.13 L642.7 496 L643.7 504.21 L644.7 512 L645.7 501.4 L646.7 493.3 L647.8 494.07 L648.9 494.58 L650 494.7 L651 485.56 L652 478.7 L653 481.68 L654 484 L655 479.26 L656 474.7 L657 473.82 L658 471.62 L659 471.19 L660 469.3 L661.1 472.15 L662.2 472.52 L663.3 476 L664.7 489.3 L666 480.86 L667.3 474.7 L668.65 477.81 L670 480 L671.3 505.3 L672.3 493.2 L673.3 478.7 L674.7 481.3 L675.7 489.35 L676.7 498.7 L677.7 495.24 L678.7 492 L679.7 498.24 L680.7 504 L681.3 538.7 L682.7 501.3 L684 496.83 L685.3 493.3 L686.3 492.3 L687.3 491.51 L688.3 491.01 L689.3 490.7 L690.3 487.95 L691.3 484.18 L692.3 481.38 L693.3 479.41 L694.3 474.47 L695.3 472.7 L696.3 475.31 L697.3 478.18 L698.3 480 L699.7 500 L700.7 512.16 L701.7 525.3 L703 501.3 L704.3 501.3 L705.3 507.93 L706.3 516 L707.7 493.3 L708.7 492.79 L709.7 490.7 L711 492.67 L712.3 496 L713.65 509.19 L715 524 L716.3 501.3 L717.65 491.83 L719 482.7 L720.35 485.86 L721.7 488 L722.8 486.96 L723.9 487.54 L725 488 L726 498.92 L727 510.7 L728 497.57 L729 482.7 L730.3 478.7 L731.3 480.54 L732.3 482.7 L733.7 500 L735 480 L736 479.57 L737 477.3 L738.35 482.44 L739.7 489.3 L740.7 506.23 L741.7 524 L743 505.3 L744 504.39 L745 502.7 L746.35 504.35 L747.7 504 L748.7 502.52 L749.7 501.3 L750.7 497.94 L751.7 495.01 L752.7 493.43 L753.7 490.7 L754.8 486.76 L755.9 485.23 L757 481.3 L758 484.88 L759 486.7 L760 481.88 L761 478.7 L762.1 482.99 L763.2 489.23 L764.3 493.3 L765.3 504.37 L766.3 514.7 L767.3 514.15 L768.3 512 L769.5 506.95 L770.7 502.7 L771.7 492.39 L772.7 484 L773.7 478.81 L774.7 474.7 L776 475.46 L777.3 474.7 L778.43 477.64 L779.57 481.37 L780.7 485.3 L781.8 483.75 L782.9 482.42 L784 481.3 L785.35 485.76 L786.7 490.7 L787.7 493.79 L788.7 494.7 L790 491.81 L791.3 490.7 L792.3 491.74 L793.3 496.5 L794.3 498.66 L795.3 500 L796.3 505.92 L797.3 509.3 L798.7 532 L800 512 L801 507.18 L802 502.7 L803 497.87 L804 490.7 L805 487.11 L806 481.3 L807.35 477.28 L808.7 474.7 L809.7 478.64 L810.7 481.3 L812 504 L813.3 509.3 L814.3 498.18 L815.3 485.3 L817 480" stroke="#e8661e" stroke-width="1.0" fill="none" stroke-linejoin="round"/>
</g>
<path d="M449 232L459 232L454 238Z" fill="#2f7de0"/>
<path d="M815.5 446.5L815.5 454.5L811 450.5Z" fill="#ff1aa0"/>
<path d="M11.3 448.3L13.2 450L11.3 451.7Z" fill="#e8e820"/>
<path d="M14.3 448.5L16.5 454L18.7 448.5" stroke="#e8e820" stroke-width="1" fill="none"/>
</svg>
<div class="b" style="left:0;top:219px;width:1px;height:452px;background:#1b4a92"></div>
<div class="b" style="left:0;top:669.5px;width:816px;height:1.2px;background:#1b4a92"></div>
<div class="b" style="left:13px;top:290px;width:14.5px;height:11px;background:#1e1e1e"></div>
<div class="b" style="left:1px;top:290.7px;width:10px;height:8px;background:#f07020;border-radius:1.5px"></div>
<svg class="L" width="900" height="900" viewBox="0 0 900 900"><path d="M11 292.2L12.8 294.7L11 297.2Z" fill="#f07020"/>
<path d="M3.2 292.5V297.5M3.2 292.7H5.5M3.2 294.8H5M7.2 293.3L8.3 292.5V297.5" stroke="#3a1400" stroke-width="0.9" fill="none"/></svg>
<!-- dialog -->
<div class="b" style="left:269px;top:348px;width:355px;height:285px;background:#1c1c1c;border:1px solid #383838"></div>
<div class="b" style="left:270px;top:349px;width:353px;height:12px;background:#303030"></div>
<div class="b" style="left:604px;top:350.5px;width:17.5px;height:10.5px;background:#262626"></div>
<svg class="L" width="900" height="900" viewBox="0 0 900 900"><path d="M609.5 352.5L615.5 358.5M615.5 352.5L609.5 358.5" stroke="#666" stroke-width="0.9"/></svg>
<div class="b" style="left:270px;top:361px;width:353px;height:11px;background:#2a2a2a"></div>
<div class="b" style="left:270px;top:372px;width:353px;height:11px;background:#282828"></div>
<div class="b" style="left:295px;top:372px;width:1px;height:260px;background:#202020"></div>
<div class="b" style="left:377px;top:372px;width:1px;height:260px;background:#202020"></div>
<div class="b" style="left:460px;top:372px;width:1px;height:260px;background:#202020"></div>
<div class="b" style="left:540px;top:372px;width:1px;height:260px;background:#202020"></div>
<div class="b" style="left:610.5px;top:394px;width:11px;height:159px;background:#2e2e2e"></div>
<div class="b" style="left:610.5px;top:553px;width:11px;height:68.5px;background:#1f1f1f"></div>
<svg class="L" width="900" height="900" viewBox="0 0 900 900"><path d="M612.5 391.5L616 388L619.5 391.5" fill="none" stroke="#f0f0f0" stroke-width="1.3"/>
<path d="M612.5 623.5L616 627L619.5 623.5" fill="none" stroke="#f0f0f0" stroke-width="1.3"/></svg>
<!-- status bar -->
<div class="b" style="left:0;top:671px;width:900px;height:31.5px;background:#1b1b1b"></div>
<div class="b" style="left:1.8px;top:674.8px;width:58.3px;height:26.3px;border:1px solid #2a7ae0;background:#3c3c3c"></div>
<div class="b" style="left:2.8px;top:675.8px;width:56.3px;height:8px;background:#262626"></div>
<div class="b" style="left:2.9px;top:675.8px;width:19.1px;height:7.5px;background:#f2f200"></div>
<div class="b" style="left:62px;top:674.8px;width:58px;height:26.3px;background:#3c3c3c"></div>
<div class="b" style="left:62px;top:674.8px;width:58px;height:9px;background:#262626"></div>
<div class="b" style="left:62.6px;top:675.8px;width:19.6px;height:7.5px;background:#ff10b4"></div>
<div class="b" style="left:122px;top:674.8px;width:58px;height:26.3px;background:#3c3c3c"></div>
<div class="b" style="left:122px;top:674.8px;width:58px;height:9px;background:#262626"></div>
<div class="b" style="left:122.6px;top:675.8px;width:19.6px;height:7.5px;background:#f26a16"></div>
<div class="b" style="left:182px;top:673px;width:57.5px;height:28px;background:#1c1c1c;border:1px solid #262626"></div>
<div class="b" style="left:198.4px;top:687.5px;width:25.3px;height:1px;background:#4e4e4e"></div>
<div class="b" style="left:211px;top:680px;width:1px;height:15px;background:#4e4e4e"></div>
<div class="b" style="left:700px;top:673px;width:77px;height:29px;background:#171717"></div>
<div class="b" style="left:701.1px;top:683.1px;width:74.2px;height:17.8px;background:#3c3c3c"></div>
<div class="b" style="left:778px;top:673px;width:69px;height:29px;background:#171717"></div>
<div class="b" style="left:778.8px;top:683px;width:67.4px;height:18px;background:#3c3c3c"></div>
<svg class="L" width="900" height="900" viewBox="0 0 900 900"><g fill="none" stroke="#777" stroke-width="0.8">
<rect x="879.5" y="676.5" width="3" height="3"/><rect x="878.5" y="680.5" width="2" height="2.5"/><rect x="881.5" y="680.5" width="2" height="2.5"/>
<rect x="889.5" y="676.5" width="3" height="3"/><rect x="888.5" y="680.5" width="2" height="2.5"/></g>
<path d="M890.5 679.5L894.5 683.5M894.5 679.5L890.5 683.5" stroke="#e02020" stroke-width="1.3"/></svg>
<div class="tx">
<i style="left:17.21px;top:201.75px;font-size:8px;color:#d4d4d4;transform:scaleX(0.95);">Utility</i>
<i style="left:68.9px;top:201.75px;font-size:8px;color:#d4d4d4;transform:scaleX(0.92);">Display</i>
<i style="left:121.29px;top:201.75px;font-size:8px;color:#d4d4d4;transform:scaleX(0.87);">Acquire</i>
<i style="left:173.15px;top:201.75px;font-size:8px;color:#d4d4d4;transform:scaleX(0.83);">Trigger</i>
<i style="left:223.63px;top:201.75px;font-size:8px;color:#d4d4d4;transform:scaleX(0.92);">Cursors</i>
<i style="left:274.69px;top:201.75px;font-size:8px;color:#d4d4d4;transform:scaleX(0.93);">Measure</i>
<i style="left:326.07px;top:201.75px;font-size:8px;color:#d4d4d4;transform:scaleX(0.96);">Math</i>
<i style="left:378.69px;top:201.75px;font-size:8px;color:#d4d4d4;transform:scaleX(0.88);">Analysis</i>
<i style="left:687.53px;top:196.75px;font-size:7.6px;color:#dcdcdc;transform:scaleX(0.96);">4GHz-12Bit</i>
<i style="left:682.14px;top:204.75px;font-size:7.6px;color:#dcdcdc;transform:scaleX(0.96);">1Gpts Memory</i>
<i style="left:744.38px;top:196.75px;font-size:7.4px;color:#e4e4e4;font-weight:bold;transform:scaleX(1.02);">SIGLENT</i>
<i style="left:790.64px;top:196.75px;font-size:7.6px;color:#22c4c4;transform:scaleX(0.94);">Trig'd</i>
<i style="left:744.09px;top:205.75px;font-size:7.6px;color:#e0207c;transform:scaleX(1.02);">f(C2) = 49.99959Hz</i>
<i style="left:837.45px;top:201.75px;font-size:7.8px;color:#e0e0e0;transform:scaleX(0.85);">POWER ANALYSIS</i>
<i style="left:820.6px;top:223.75px;font-size:8px;color:#dadada;transform:scaleX(0.91);">Enable To Test</i>
<i style="left:820.99px;top:260.75px;font-size:8px;color:#dadada;transform:scaleX(0.92);">Analysis</i>
<i style="left:822.63px;top:278.75px;font-size:8px;color:#dadada;transform:scaleX(0.92);">Current Harmonics</i>
<i style="left:821.43px;top:299.75px;font-size:8px;color:#dadada;transform:scaleX(0.92);">Test State</i>
<i style="left:820.4px;top:346.75px;font-size:8px;color:#dadada;transform:scaleX(0.95);">Input Setup</i>
<i style="left:820.62px;top:384.75px;font-size:8px;color:#dadada;transform:scaleX(0.94);">Config</i>
<i style="left:821.09px;top:420.75px;font-size:8px;color:#dadada;transform:scaleX(0.85);">Apply</i>
<i style="left:833.57px;top:240.75px;font-size:8.2px;color:#0c2a55;transform:scaleX(0.97);">on</i>
<i style="left:872.46px;top:240.75px;font-size:8.2px;color:#f0f0f0;">off</i>
<i style="left:833.57px;top:316.75px;font-size:8.2px;color:#0c2a55;transform:scaleX(0.97);">on</i>
<i style="left:872.46px;top:316.75px;font-size:8.2px;color:#f0f0f0;">off</i>
<i style="left:13.43px;top:291.75px;font-size:8.2px;color:#d8702e;transform:scaleX(0.85);">FFT</i>
<i style="left:1.3px;top:444.75px;font-size:8px;color:#e8e820;transform:scaleX(0.99);">C1</i>
<i style="left:274.63px;top:350.75px;font-size:7.8px;color:#e2e2e2;transform:scaleX(0.94);">Current Harmonics</i>
<i style="left:285.8px;top:362.75px;font-size:7.6px;color:#e2e2e2;transform:scaleX(0.99);">IEC61000-3-2 A</i>
<i style="left:374.23px;top:362.75px;font-size:7.8px;color:#1ed21e;transform:scaleX(1.05);">Pass 76/76</i>
<i style="left:462.84px;top:362.75px;font-size:7.6px;color:#e2e2e2;transform:scaleX(0.96);">THD : 0.07%</i>
<i style="left:550.18px;top:362.75px;font-size:7.6px;color:#e2e2e2;">Freq : 50.07Hz</i>
<i style="left:273.39px;top:373.75px;font-size:7.6px;color:#e2e2e2;transform:scaleX(0.97);">Harm</i>
<i style="left:317.27px;top:373.75px;font-size:7.6px;color:#e2e2e2;transform:scaleX(0.88);">Value(RMS)</i>
<i style="left:399.93px;top:373.75px;font-size:7.6px;color:#e2e2e2;transform:scaleX(0.91);">Limit(RMS)</i>
<i style="left:483.65px;top:373.75px;font-size:7.6px;color:#e2e2e2;transform:scaleX(0.88);">Margin(%)</i>
<i style="left:566.36px;top:373.75px;font-size:7.6px;color:#e2e2e2;transform:scaleX(0.97);">State</i>
<i style="left:279.92px;top:382.75px;font-size:7.5px;color:#e2e2e2;transform:scaleX(1.18);">1</i>
<i style="left:319.12px;top:382.75px;font-size:7.5px;color:#e2e2e2;transform:scaleX(1.02);">4.708252</i>
<i style="left:414.8px;top:381.75px;font-size:7.5px;color:#e2e2e2;">--</i>
<i style="left:496.5px;top:381.75px;font-size:7.5px;color:#e2e2e2;">--</i>
<i style="left:558.73px;top:382.75px;font-size:7.5px;color:#e2e2e2;transform:scaleX(0.85);">NON SPEC</i>
<i style="left:280.04px;top:391.75px;font-size:7.5px;color:#e2e2e2;transform:scaleX(1.18);">2</i>
<i style="left:319.06px;top:391.75px;font-size:7.5px;color:#e2e2e2;transform:scaleX(1.02);">0.001167</i>
<i style="left:401.18px;top:391.75px;font-size:7.5px;color:#e2e2e2;transform:scaleX(1.02);">1.080000</i>
<i style="left:486.4px;top:391.75px;font-size:7.5px;color:#e2e2e2;transform:scaleX(0.99);">99.89%</i>
<i style="left:566.2px;top:391.75px;font-size:7.5px;color:#20d020;transform:scaleX(0.89);">PASS</i>
<i style="left:280.07px;top:400.75px;font-size:7.5px;color:#e2e2e2;transform:scaleX(1.18);">3</i>
<i style="left:319.06px;top:400.75px;font-size:7.5px;color:#e2e2e2;transform:scaleX(1.02);">0.000721</i>
<i style="left:401.28px;top:400.75px;font-size:7.5px;color:#e2e2e2;transform:scaleX(1.02);">2.300000</i>
<i style="left:486.4px;top:400.75px;font-size:7.5px;color:#e2e2e2;transform:scaleX(0.99);">99.97%</i>
<i style="left:566.2px;top:400.75px;font-size:7.5px;color:#20d020;transform:scaleX(0.89);">PASS</i>
<i style="left:280.07px;top:409.75px;font-size:7.5px;color:#e2e2e2;transform:scaleX(1.18);">4</i>
<i style="left:319.06px;top:409.75px;font-size:7.5px;color:#e2e2e2;transform:scaleX(1.02);">0.001117</i>
<i style="left:401.32px;top:409.75px;font-size:7.5px;color:#e2e2e2;transform:scaleX(1.02);">0.430000</i>
<i style="left:486.4px;top:409.75px;font-size:7.5px;color:#e2e2e2;transform:scaleX(0.99);">99.74%</i>
<i style="left:566.2px;top:409.75px;font-size:7.5px;color:#20d020;transform:scaleX(0.89);">PASS</i>
<i style="left:280.05px;top:418.75px;font-size:7.5px;color:#e2e2e2;transform:scaleX(1.18);">5</i>
<i style="left:319.03px;top:418.75px;font-size:7.5px;color:#e2e2e2;transform:scaleX(1.02);">0.001045</i>
<i style="left:401.18px;top:418.75px;font-size:7.5px;color:#e2e2e2;transform:scaleX(1.02);">1.140000</i>
<i style="left:486.4px;top:418.75px;font-size:7.5px;color:#e2e2e2;transform:scaleX(0.99);">99.91%</i>
<i style="left:566.2px;top:418.75px;font-size:7.5px;color:#20d020;transform:scaleX(0.89);">PASS</i>
<i style="left:280.01px;top:427.75px;font-size:7.5px;color:#e2e2e2;transform:scaleX(1.18);">6</i>
<i style="left:318.98px;top:427.75px;font-size:7.5px;color:#e2e2e2;transform:scaleX(1.02);">0.000224</i>
<i style="left:401.32px;top:427.75px;font-size:7.5px;color:#e2e2e2;transform:scaleX(1.02);">0.300000</i>
<i style="left:486.4px;top:427.75px;font-size:7.5px;color:#e2e2e2;transform:scaleX(0.99);">99.93%</i>
<i style="left:566.2px;top:427.75px;font-size:7.5px;color:#20d020;transform:scaleX(0.89);">PASS</i>
<i style="left:280.04px;top:435.75px;font-size:7.5px;color:#e2e2e2;transform:scaleX(1.18);">7</i>
<i style="left:319.06px;top:435.75px;font-size:7.5px;color:#e2e2e2;transform:scaleX(1.02);">0.000751</i>
<i style="left:401.32px;top:435.75px;font-size:7.5px;color:#e2e2e2;transform:scaleX(1.02);">0.770000</i>
<i style="left:486.4px;top:435.75px;font-size:7.5px;color:#e2e2e2;transform:scaleX(0.99);">99.90%</i>
<i style="left:566.2px;top:435.75px;font-size:7.5px;color:#20d020;transform:scaleX(0.89);">PASS</i>
<i style="left:280.04px;top:444.75px;font-size:7.5px;color:#e2e2e2;transform:scaleX(1.18);">8</i>
<i style="left:319.04px;top:444.75px;font-size:7.5px;color:#e2e2e2;transform:scaleX(1.02);">0.000483</i>
<i style="left:401.36px;top:444.75px;font-size:7.5px;color:#e2e2e2;transform:scaleX(1.02);">0.262857</i>
<i style="left:486.4px;top:444.75px;font-size:7.5px;color:#e2e2e2;transform:scaleX(0.99);">99.82%</i>
<i style="left:566.2px;top:444.75px;font-size:7.5px;color:#20d020;transform:scaleX(0.89);">PASS</i>
<i style="left:280.05px;top:453.75px;font-size:7.5px;color:#e2e2e2;transform:scaleX(1.18);">9</i>
<i style="left:319.05px;top:453.75px;font-size:7.5px;color:#e2e2e2;transform:scaleX(1.02);">0.000369</i>
<i style="left:401.32px;top:453.75px;font-size:7.5px;color:#e2e2e2;transform:scaleX(1.02);">0.400000</i>
<i style="left:486.4px;top:453.75px;font-size:7.5px;color:#e2e2e2;transform:scaleX(0.99);">99.91%</i>
<i style="left:566.2px;top:453.75px;font-size:7.5px;color:#20d020;transform:scaleX(0.89);">PASS</i>
<i style="left:277.42px;top:462.75px;font-size:7.5px;color:#e2e2e2;transform:scaleX(1.18);">10</i>
<i style="left:319.04px;top:462.75px;font-size:7.5px;color:#e2e2e2;transform:scaleX(1.02);">0.000798</i>
<i style="left:401.28px;top:462.75px;font-size:7.5px;color:#e2e2e2;transform:scaleX(1.02);">0.204444</i>
<i style="left:486.4px;top:462.75px;font-size:7.5px;color:#e2e2e2;transform:scaleX(0.99);">99.61%</i>
<i style="left:566.2px;top:462.75px;font-size:7.5px;color:#20d020;transform:scaleX(0.89);">PASS</i>
<i style="left:277.47px;top:471.75px;font-size:7.5px;color:#e2e2e2;transform:scaleX(1.18);">11</i>
<i style="left:319.06px;top:471.75px;font-size:7.5px;color:#e2e2e2;transform:scaleX(1.02);">0.000311</i>
<i style="left:401.32px;top:471.75px;font-size:7.5px;color:#e2e2e2;transform:scaleX(1.02);">0.330000</i>
<i style="left:486.4px;top:471.75px;font-size:7.5px;color:#e2e2e2;transform:scaleX(0.99);">99.91%</i>
<i style="left:566.2px;top:471.75px;font-size:7.5px;color:#20d020;transform:scaleX(0.89);">PASS</i>
<i style="left:277.47px;top:480.75px;font-size:7.5px;color:#e2e2e2;transform:scaleX(1.18);">12</i>
<i style="left:319.06px;top:480.75px;font-size:7.5px;color:#e2e2e2;transform:scaleX(1.02);">0.000392</i>
<i style="left:401.34px;top:480.75px;font-size:7.5px;color:#e2e2e2;transform:scaleX(1.02);">0.167273</i>
<i style="left:486.4px;top:480.75px;font-size:7.5px;color:#e2e2e2;transform:scaleX(0.99);">99.77%</i>
<i style="left:566.2px;top:480.75px;font-size:7.5px;color:#20d020;transform:scaleX(0.89);">PASS</i>
<i style="left:277.44px;top:489.75px;font-size:7.5px;color:#e2e2e2;transform:scaleX(1.18);">13</i>
<i style="left:319.06px;top:489.75px;font-size:7.5px;color:#e2e2e2;transform:scaleX(1.02);">0.000547</i>
<i style="left:401.32px;top:489.75px;font-size:7.5px;color:#e2e2e2;transform:scaleX(1.02);">0.210000</i>
<i style="left:486.4px;top:489.75px;font-size:7.5px;color:#e2e2e2;transform:scaleX(0.99);">99.74%</i>
<i style="left:566.2px;top:489.75px;font-size:7.5px;color:#20d020;transform:scaleX(0.89);">PASS</i>
<i style="left:277.38px;top:498.75px;font-size:7.5px;color:#e2e2e2;transform:scaleX(1.18);">14</i>
<i style="left:319.03px;top:498.75px;font-size:7.5px;color:#e2e2e2;transform:scaleX(1.02);">0.000875</i>
<i style="left:401.34px;top:498.75px;font-size:7.5px;color:#e2e2e2;transform:scaleX(1.02);">0.141538</i>
<i style="left:486.4px;top:498.75px;font-size:7.5px;color:#e2e2e2;transform:scaleX(0.99);">99.38%</i>
<i style="left:566.2px;top:498.75px;font-size:7.5px;color:#20d020;transform:scaleX(0.89);">PASS</i>
<i style="left:277.43px;top:507.75px;font-size:7.5px;color:#e2e2e2;transform:scaleX(1.18);">15</i>
<i style="left:319.03px;top:507.75px;font-size:7.5px;color:#e2e2e2;transform:scaleX(1.02);">0.000265</i>
<i style="left:401.28px;top:507.75px;font-size:7.5px;color:#e2e2e2;transform:scaleX(1.02);">0.160714</i>
<i style="left:486.4px;top:507.75px;font-size:7.5px;color:#e2e2e2;transform:scaleX(0.99);">99.83%</i>
<i style="left:566.2px;top:507.75px;font-size:7.5px;color:#20d020;transform:scaleX(0.89);">PASS</i>
<i style="left:277.44px;top:516.75px;font-size:7.5px;color:#e2e2e2;transform:scaleX(1.18);">16</i>
<i style="left:319.04px;top:516.75px;font-size:7.5px;color:#e2e2e2;transform:scaleX(1.02);">0.000208</i>
<i style="left:401.36px;top:516.75px;font-size:7.5px;color:#e2e2e2;transform:scaleX(1.02);">0.122667</i>
<i style="left:486.4px;top:516.75px;font-size:7.5px;color:#e2e2e2;transform:scaleX(0.99);">99.83%</i>
<i style="left:566.2px;top:516.75px;font-size:7.5px;color:#20d020;transform:scaleX(0.89);">PASS</i>
<i style="left:277.47px;top:525.75px;font-size:7.5px;color:#e2e2e2;transform:scaleX(1.18);">17</i>
<i style="left:319.04px;top:525.75px;font-size:7.5px;color:#e2e2e2;transform:scaleX(1.02);">0.000346</i>
<i style="left:401.33px;top:525.75px;font-size:7.5px;color:#e2e2e2;transform:scaleX(1.02);">0.140625</i>
<i style="left:486.4px;top:525.75px;font-size:7.5px;color:#e2e2e2;transform:scaleX(0.99);">99.75%</i>
<i style="left:566.2px;top:525.75px;font-size:7.5px;color:#20d020;transform:scaleX(0.89);">PASS</i>
<i style="left:277.44px;top:534.75px;font-size:7.5px;color:#e2e2e2;transform:scaleX(1.18);">18</i>
<i style="left:319.06px;top:534.75px;font-size:7.5px;color:#e2e2e2;transform:scaleX(1.02);">0.000402</i>
<i style="left:401.33px;top:534.75px;font-size:7.5px;color:#e2e2e2;transform:scaleX(1.02);">0.108235</i>
<i style="left:486.4px;top:534.75px;font-size:7.5px;color:#e2e2e2;transform:scaleX(0.99);">99.63%</i>
<i style="left:566.2px;top:534.75px;font-size:7.5px;color:#20d020;transform:scaleX(0.89);">PASS</i>
<i style="left:277.46px;top:542.75px;font-size:7.5px;color:#e2e2e2;transform:scaleX(1.18);">19</i>
<i style="left:319.02px;top:542.75px;font-size:7.5px;color:#e2e2e2;transform:scaleX(1.02);">0.000460</i>
<i style="left:401.32px;top:542.75px;font-size:7.5px;color:#e2e2e2;transform:scaleX(1.02);">0.125000</i>
<i style="left:486.4px;top:542.75px;font-size:7.5px;color:#e2e2e2;transform:scaleX(0.99);">99.63%</i>
<i style="left:566.2px;top:542.75px;font-size:7.5px;color:#20d020;transform:scaleX(0.89);">PASS</i>
<i style="left:277.54px;top:551.75px;font-size:7.5px;color:#e2e2e2;transform:scaleX(1.18);">20</i>
<i style="left:319.03px;top:551.75px;font-size:7.5px;color:#e2e2e2;transform:scaleX(1.02);">0.000355</i>
<i style="left:401.36px;top:551.75px;font-size:7.5px;color:#e2e2e2;transform:scaleX(1.02);">0.096842</i>
<i style="left:486.4px;top:551.75px;font-size:7.5px;color:#e2e2e2;transform:scaleX(0.99);">99.63%</i>
<i style="left:566.2px;top:551.75px;font-size:7.5px;color:#20d020;transform:scaleX(0.89);">PASS</i>
<i style="left:277.58px;top:560.75px;font-size:7.5px;color:#e2e2e2;transform:scaleX(1.18);">21</i>
<i style="left:319.06px;top:560.75px;font-size:7.5px;color:#e2e2e2;transform:scaleX(1.02);">0.000682</i>
<i style="left:401.32px;top:560.75px;font-size:7.5px;color:#e2e2e2;transform:scaleX(1.02);">0.112500</i>
<i style="left:486.4px;top:560.75px;font-size:7.5px;color:#e2e2e2;transform:scaleX(0.99);">99.39%</i>
<i style="left:566.2px;top:560.75px;font-size:7.5px;color:#20d020;transform:scaleX(0.89);">PASS</i>
<i style="left:277.59px;top:569.75px;font-size:7.5px;color:#e2e2e2;transform:scaleX(1.18);">22</i>
<i style="left:319.04px;top:569.75px;font-size:7.5px;color:#e2e2e2;transform:scaleX(1.02);">0.000428</i>
<i style="left:401.35px;top:569.75px;font-size:7.5px;color:#e2e2e2;transform:scaleX(1.02);">0.087619</i>
<i style="left:486.4px;top:569.75px;font-size:7.5px;color:#e2e2e2;transform:scaleX(0.99);">99.51%</i>
<i style="left:566.2px;top:569.75px;font-size:7.5px;color:#20d020;transform:scaleX(0.89);">PASS</i>
<i style="left:277.56px;top:578.75px;font-size:7.5px;color:#e2e2e2;transform:scaleX(1.18);">23</i>
<i style="left:319.06px;top:578.75px;font-size:7.5px;color:#e2e2e2;transform:scaleX(1.02);">0.000572</i>
<i style="left:401.34px;top:578.75px;font-size:7.5px;color:#e2e2e2;transform:scaleX(1.02);">0.102273</i>
<i style="left:486.4px;top:578.75px;font-size:7.5px;color:#e2e2e2;transform:scaleX(0.99);">99.44%</i>
<i style="left:566.2px;top:578.75px;font-size:7.5px;color:#20d020;transform:scaleX(0.89);">PASS</i>
<i style="left:277.49px;top:587.75px;font-size:7.5px;color:#e2e2e2;transform:scaleX(1.18);">24</i>
<i style="left:319.06px;top:587.75px;font-size:7.5px;color:#e2e2e2;transform:scaleX(1.02);">0.000517</i>
<i style="left:401.32px;top:587.75px;font-size:7.5px;color:#e2e2e2;transform:scaleX(1.02);">0.080000</i>
<i style="left:486.4px;top:587.75px;font-size:7.5px;color:#e2e2e2;transform:scaleX(0.99);">99.35%</i>
<i style="left:566.2px;top:587.75px;font-size:7.5px;color:#20d020;transform:scaleX(0.89);">PASS</i>
<i style="left:277.55px;top:596.75px;font-size:7.5px;color:#e2e2e2;transform:scaleX(1.18);">25</i>
<i style="left:319.02px;top:596.75px;font-size:7.5px;color:#e2e2e2;transform:scaleX(1.02);">0.000170</i>
<i style="left:401.32px;top:596.75px;font-size:7.5px;color:#e2e2e2;transform:scaleX(1.02);">0.093750</i>
<i style="left:486.4px;top:596.75px;font-size:7.5px;color:#e2e2e2;transform:scaleX(0.99);">99.82%</i>
<i style="left:566.2px;top:596.75px;font-size:7.5px;color:#20d020;transform:scaleX(0.89);">PASS</i>
<i style="left:277.56px;top:605.75px;font-size:7.5px;color:#e2e2e2;transform:scaleX(1.18);">26</i>
<i style="left:319.04px;top:605.75px;font-size:7.5px;color:#e2e2e2;transform:scaleX(1.02);">0.000298</i>
<i style="left:401.32px;top:605.75px;font-size:7.5px;color:#e2e2e2;transform:scaleX(1.02);">0.073600</i>
<i style="left:486.4px;top:605.75px;font-size:7.5px;color:#e2e2e2;transform:scaleX(0.99);">99.59%</i>
<i style="left:566.2px;top:605.75px;font-size:7.5px;color:#20d020;transform:scaleX(0.89);">PASS</i>
<i style="left:277.59px;top:614.75px;font-size:7.5px;color:#e2e2e2;transform:scaleX(1.18);">27</i>
<i style="left:319.03px;top:614.75px;font-size:7.5px;color:#e2e2e2;transform:scaleX(1.02);">0.000305</i>
<i style="left:401.34px;top:614.75px;font-size:7.5px;color:#e2e2e2;transform:scaleX(1.02);">0.086538</i>
<i style="left:486.4px;top:614.75px;font-size:7.5px;color:#e2e2e2;transform:scaleX(0.99);">99.65%</i>
<i style="left:566.2px;top:614.75px;font-size:7.5px;color:#20d020;transform:scaleX(0.89);">PASS</i>
<i style="left:277.56px;top:623.75px;font-size:7.5px;color:#e2e2e2;transform:scaleX(1.18);">28</i>
<i style="left:319.02px;top:623.75px;font-size:7.5px;color:#e2e2e2;transform:scaleX(1.02);">0.000140</i>
<i style="left:401.34px;top:623.75px;font-size:7.5px;color:#e2e2e2;transform:scaleX(1.02);">0.068148</i>
<i style="left:486.4px;top:623.75px;font-size:7.5px;color:#e2e2e2;transform:scaleX(0.99);">99.79%</i>
<i style="left:566.2px;top:623.75px;font-size:7.5px;color:#20d020;transform:scaleX(0.89);">PASS</i>
<i style="left:7.53px;top:674.75px;font-size:7.6px;color:#1a1a1a;">C1</i>
<i style="left:40.37px;top:674.75px;font-size:6.2px;color:#c8c810;transform:scaleX(1.05);">DC1M</i>
<i style="left:2.99px;top:683.75px;font-size:7.6px;color:#e0e0e0;transform:scaleX(0.88);">1X</i>
<i style="left:35.92px;top:683.75px;font-size:7.6px;color:#e0e0e0;transform:scaleX(0.99);">2.00V/</i>
<i style="left:3px;top:691.75px;font-size:7.6px;color:#e0e0e0;transform:scaleX(0.81);">FULL</i>
<i style="left:39.52px;top:691.75px;font-size:7.6px;color:#e0e0e0;transform:scaleX(0.93);">0.00V</i>
<i style="left:67.54px;top:674.75px;font-size:7.6px;color:#4a0030;">C2</i>
<i style="left:100.14px;top:674.75px;font-size:6.2px;color:#c81870;transform:scaleX(1.09);">DC1M</i>
<i style="left:63.13px;top:683.75px;font-size:7.6px;color:#e0e0e0;transform:scaleX(0.98);">1V/A</i>
<i style="left:96px;top:683.75px;font-size:7.6px;color:#e0e0e0;transform:scaleX(1.04);">2.00A/</i>
<i style="left:63.21px;top:691.75px;font-size:7.6px;color:#e0e0e0;transform:scaleX(0.78);">FULL</i>
<i style="left:99.71px;top:691.75px;font-size:7.6px;color:#e0e0e0;transform:scaleX(0.96);">0.00A</i>
<i style="left:127.84px;top:674.75px;font-size:7.6px;color:#3a1200;">F1</i>
<i style="left:156.33px;top:674.75px;font-size:6.2px;color:#c05a1c;transform:scaleX(0.93);">FFT(C2)</i>
<i style="left:148.23px;top:683.75px;font-size:7.6px;color:#e0e0e0;transform:scaleX(0.97);">20.0dBA/</i>
<i style="left:151.45px;top:691.75px;font-size:7.6px;color:#e0e0e0;transform:scaleX(0.93);">23.5dBA</i>
<i style="left:703.14px;top:673.75px;font-size:7.6px;color:#e0e0e0;transform:scaleX(0.95);">Timebase</i>
<i style="left:703.01px;top:682.75px;font-size:7.6px;color:#e0e0e0;transform:scaleX(0.97);">0.00s</i>
<i style="left:738.6px;top:682.75px;font-size:7.6px;color:#e0e0e0;transform:scaleX(0.97);">50.0ms/div</i>
<i style="left:702.74px;top:691.75px;font-size:7.6px;color:#e0e0e0;transform:scaleX(0.97);">100kpts</i>
<i style="left:743.83px;top:691.75px;font-size:7.6px;color:#e0e0e0;transform:scaleX(0.97);">200kSa/s</i>
<i style="left:779.95px;top:673.75px;font-size:7.6px;color:#e0207c;transform:scaleX(0.9);">Trigger</i>
<i style="left:826.69px;top:674.75px;font-size:6.2px;color:#c8186c;transform:scaleX(0.99);">C2 DC</i>
<i style="left:779.99px;top:682.75px;font-size:7.6px;color:#e0e0e0;transform:scaleX(0.91);">Auto</i>
<i style="left:824.6px;top:682.75px;font-size:7.6px;color:#e0e0e0;transform:scaleX(1.02);">0.00A</i>
<i style="left:779.43px;top:691.75px;font-size:7.6px;color:#e0e0e0;transform:scaleX(0.91);">Edge</i>
<i style="left:824.28px;top:691.75px;font-size:7.6px;color:#e0e0e0;">Rising</i>
<i style="left:858.19px;top:683.75px;font-size:8px;color:#e0e0e0;transform:scaleX(1.02);">22:35:34</i>
<i style="left:851.96px;top:691.75px;font-size:8px;color:#e0e0e0;transform:scaleX(1.1);">2023/11/13</i>
</div>
</div></body></html>
